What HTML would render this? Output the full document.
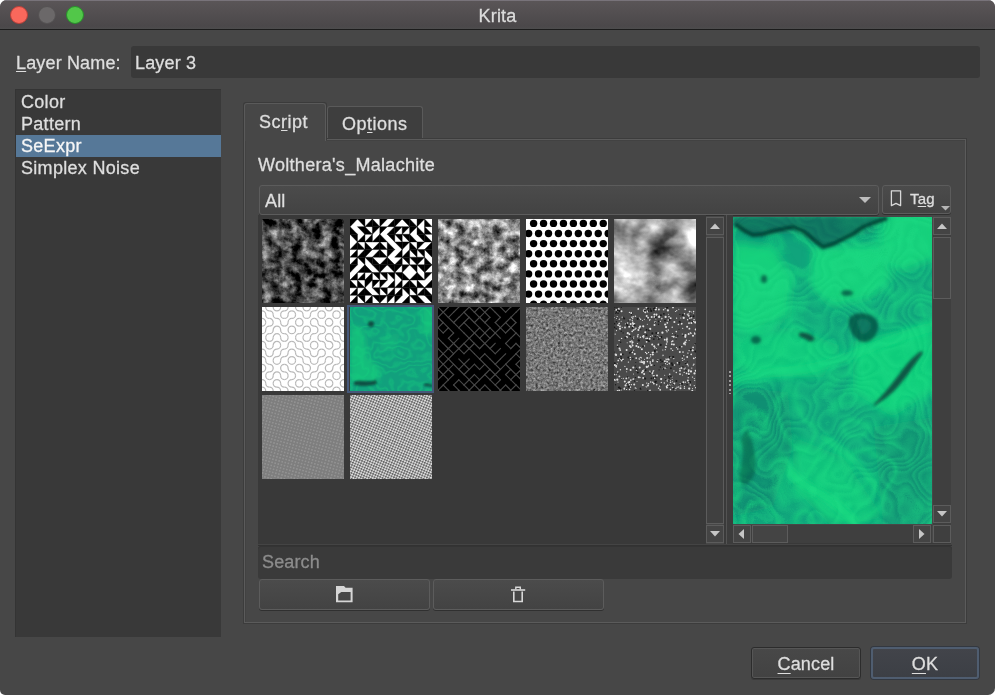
<!DOCTYPE html>
<html><head><meta charset="utf-8">
<style>
*{box-sizing:border-box;margin:0;padding:0}
html,body{width:995px;height:695px;overflow:hidden;background:#fff}
body{font-family:"Liberation Sans",sans-serif;font-size:18px;color:#dedede;position:relative}
.a{position:absolute}
#win{left:0;top:0;width:995px;height:695px;background:#474747;border-radius:7px 7px 7px 5px;overflow:hidden}
#title{left:0;top:0;width:995px;height:29px;background:linear-gradient(#5a5557,#4b484a 90%,#4d4c4d);border-top:1px solid #78737a}
#tline{left:0;top:29px;width:995px;height:1px;background:#1c1c1c}
.tl{width:18px;height:18px;border-radius:50%;top:6px}
.u{text-decoration:underline;text-underline-offset:2px;text-decoration-thickness:1px}
.t{line-height:21px;white-space:nowrap;will-change:transform;-webkit-text-stroke:0.3px currentColor;letter-spacing:0.15px}
.sb{background:#444;border:1px solid #5c5c5c}
.btn{background:linear-gradient(#4b4b4b,#434343);border:1px solid #5c5c5c;border-radius:3px;box-shadow:0 1px 0 #303030}
.th{width:82px;height:84px;overflow:hidden}
.th svg{display:block}
</style></head><body>
<div id="win" class="a">
  <div id="title" class="a"></div>
  <div id="tline" class="a"></div>
  <div class="a tl" style="left:10px;background:#f9685c;border:1px solid #b9403a"></div>
  <div class="a tl" style="left:38px;background:#6b6869;border:1px solid #555253"></div>
  <div class="a tl" style="left:66px;background:#52c749;border:1px solid #27902a"></div>
  <div class="a t" style="left:0;top:6px;width:995px;text-align:center;color:#dcdcdc">Krita</div>

  <div class="a t" style="left:16px;top:53px"><span class="u">L</span>ayer Name:</div>
  <div class="a" style="left:131px;top:46px;width:849px;height:32px;background:#393939;border-radius:3px"></div>
  <div class="a t" style="left:135px;top:53px">Layer 3</div>

  <div class="a" style="left:15px;top:89px;width:206px;height:548px;background:#393939;box-shadow:inset 1px 1px 0 #343434"></div>
  <div class="a" style="left:16px;top:135px;width:205px;height:22px;background:#567898"></div>
  <div class="a t" style="left:21px;top:91px;line-height:22px;letter-spacing:0.3px">Color<br>Pattern<br><span style="color:#f6f6f6">SeExpr</span><br>Simplex Noise</div>

  <!-- tabs -->
  <div class="a" style="left:327px;top:106px;width:96px;height:34px;background:#3e3e3e;border:1px solid #5a5a5a;border-bottom:none;border-radius:3px 3px 0 0"></div>
  <div class="a" style="left:244px;top:139px;width:722px;height:484px;border:1px solid #5b5b5b;box-shadow:0 0 0 1px #3c3c3c,inset 1px 1px 0 #424242"></div>
  <div class="a" style="left:244px;top:103px;width:82px;height:38px;background:#474747;border:1px solid #5a5a5a;border-bottom:none;border-radius:3px 3px 0 0;box-shadow:-1px -1px 0 #3b3b3b,1px -1px 0 #3b3b3b"></div>
  <div class="a t" style="left:259px;top:112px;letter-spacing:0.5px">Sc<span class="u">r</span>ipt</div>
  <div class="a t" style="left:342px;top:114px;letter-spacing:0.5px">Op<span class="u">t</span>ions</div>

  <div class="a t" style="left:258px;top:155px;letter-spacing:0.3px">Wolthera's_Malachite</div>

  <!-- combo -->
  <div class="a btn" style="left:259px;top:185px;width:620px;height:30px"></div>
  <div class="a t" style="left:265px;top:191px">All</div>
  <svg class="a" style="left:858px;top:196px" width="14" height="8"><path d="M1 1 L13 1 L7 7 Z" fill="#bdbdbd"/></svg>

  <!-- tag -->
  <div class="a btn" style="left:882px;top:185px;width:69px;height:29px"></div>
  <svg class="a" style="left:889px;top:189px" width="14" height="20"><path d="M2.4 1.8 H11.6 V16.6 L7 14.4 L2.4 16.6 Z" fill="none" stroke="#d8d8d8" stroke-width="1.3" stroke-linejoin="round"/></svg>
  <div class="a t" style="left:910px;top:188px;font-size:15px">T<span class="u">a</span>g</div>
  <svg class="a" style="left:940px;top:205px" width="11" height="6"><path d="M1 1 L10 1 L5.5 5.5 Z" fill="#b5b5b5"/></svg>

  <!-- grid -->
  <div class="a" style="left:258px;top:215px;width:448px;height:329px;background:#393939"></div>
  <div id="thumbs"><div class="a th" style="left:262px;top:219px;"><svg width="82" height="84" viewBox="0 0 82 84" preserveAspectRatio="none"><filter id="n1" x="0" y="0" width="100%" height="100%" color-interpolation-filters="sRGB"><feTurbulence type="fractalNoise" baseFrequency="0.1" numOctaves="4" seed="3"/><feColorMatrix type="matrix" values="0.33 0.33 0.33 0 0 0.33 0.33 0.33 0 0 0.33 0.33 0.33 0 0 0 0 0 0 1"/><feComponentTransfer><feFuncR type="linear" slope="2.4" intercept="-0.92"/><feFuncG type="linear" slope="2.4" intercept="-0.92"/><feFuncB type="linear" slope="2.4" intercept="-0.92"/></feComponentTransfer></filter><rect width="82" height="84" filter="url(#n1)"/></svg></div>
<div class="a th" style="left:350px;top:219px;"><svg width="82" height="84" viewBox="0 0 82 84" preserveAspectRatio="none"><rect width="82" height="84" fill="#fff"/><g stroke="#000" stroke-width="0.4" stroke-linejoin="round"><path d="M0.00 0.00L7.45 0.00L0.00 7.64Z"/><path d="M0.00 7.64L7.45 15.27L0.00 15.27Z"/><path d="M0.00 15.27L7.45 15.27L7.45 22.91Z"/><path d="M7.45 22.91L7.45 30.55L0.00 30.55Z"/><path d="M7.45 30.55L7.45 38.18L0.00 38.18Z"/><path d="M7.45 38.18L7.45 45.82L0.00 45.82Z"/><path d="M0.00 45.82L7.45 45.82L0.00 53.45Z"/><path d="M7.45 53.45L7.45 61.09L0.00 61.09Z"/><path d="M0.00 61.09L7.45 68.73L0.00 68.73Z"/><path d="M7.45 68.73L7.45 76.36L0.00 76.36Z"/><path d="M7.45 76.36L7.45 84.00L0.00 84.00Z"/><path d="M7.45 0.00L14.91 0.00L14.91 7.64Z"/><path d="M7.45 7.64L14.91 7.64L14.91 15.27Z"/><path d="M14.91 15.27L14.91 22.91L7.45 22.91Z"/><path d="M7.45 22.91L14.91 30.55L7.45 30.55Z"/><path d="M14.91 30.55L14.91 38.18L7.45 38.18Z"/><path d="M7.45 38.18L14.91 38.18L14.91 45.82Z"/><path d="M14.91 45.82L14.91 53.45L7.45 53.45Z"/><path d="M14.91 53.45L14.91 61.09L7.45 61.09Z"/><path d="M7.45 61.09L14.91 68.73L7.45 68.73Z"/><path d="M14.91 68.73L14.91 76.36L7.45 76.36Z"/><path d="M7.45 76.36L14.91 76.36L14.91 84.00Z"/><path d="M22.36 0.00L22.36 7.64L14.91 7.64Z"/><path d="M14.91 7.64L22.36 15.27L14.91 15.27Z"/><path d="M22.36 15.27L22.36 22.91L14.91 22.91Z"/><path d="M14.91 22.91L22.36 30.55L14.91 30.55Z"/><path d="M14.91 30.55L22.36 30.55L14.91 38.18Z"/><path d="M14.91 38.18L22.36 38.18L22.36 45.82Z"/><path d="M14.91 45.82L22.36 53.45L14.91 53.45Z"/><path d="M22.36 53.45L22.36 61.09L14.91 61.09Z"/><path d="M14.91 61.09L22.36 61.09L14.91 68.73Z"/><path d="M14.91 68.73L22.36 76.36L14.91 76.36Z"/><path d="M22.36 76.36L22.36 84.00L14.91 84.00Z"/><path d="M22.36 0.00L29.82 7.64L22.36 7.64Z"/><path d="M22.36 7.64L29.82 7.64L22.36 15.27Z"/><path d="M29.82 15.27L29.82 22.91L22.36 22.91Z"/><path d="M29.82 22.91L29.82 30.55L22.36 30.55Z"/><path d="M29.82 30.55L29.82 38.18L22.36 38.18Z"/><path d="M22.36 38.18L29.82 45.82L22.36 45.82Z"/><path d="M22.36 45.82L29.82 45.82L29.82 53.45Z"/><path d="M22.36 53.45L29.82 53.45L29.82 61.09Z"/><path d="M22.36 61.09L29.82 61.09L22.36 68.73Z"/><path d="M22.36 68.73L29.82 68.73L29.82 76.36Z"/><path d="M22.36 76.36L29.82 76.36L29.82 84.00Z"/><path d="M29.82 0.00L37.27 0.00L29.82 7.64Z"/><path d="M29.82 7.64L37.27 7.64L29.82 15.27Z"/><path d="M29.82 15.27L37.27 22.91L29.82 22.91Z"/><path d="M29.82 22.91L37.27 30.55L29.82 30.55Z"/><path d="M29.82 30.55L37.27 38.18L29.82 38.18Z"/><path d="M37.27 38.18L37.27 45.82L29.82 45.82Z"/><path d="M29.82 45.82L37.27 45.82L29.82 53.45Z"/><path d="M29.82 53.45L37.27 53.45L37.27 61.09Z"/><path d="M29.82 61.09L37.27 61.09L29.82 68.73Z"/><path d="M29.82 68.73L37.27 68.73L37.27 76.36Z"/><path d="M29.82 76.36L37.27 76.36L29.82 84.00Z"/><path d="M44.73 0.00L44.73 7.64L37.27 7.64Z"/><path d="M44.73 7.64L44.73 15.27L37.27 15.27Z"/><path d="M37.27 15.27L44.73 15.27L44.73 22.91Z"/><path d="M37.27 22.91L44.73 30.55L37.27 30.55Z"/><path d="M37.27 30.55L44.73 30.55L37.27 38.18Z"/><path d="M37.27 38.18L44.73 45.82L37.27 45.82Z"/><path d="M37.27 45.82L44.73 45.82L44.73 53.45Z"/><path d="M37.27 53.45L44.73 53.45L44.73 61.09Z"/><path d="M44.73 61.09L44.73 68.73L37.27 68.73Z"/><path d="M44.73 68.73L44.73 76.36L37.27 76.36Z"/><path d="M37.27 76.36L44.73 76.36L37.27 84.00Z"/><path d="M44.73 0.00L52.18 0.00L44.73 7.64Z"/><path d="M44.73 7.64L52.18 7.64L44.73 15.27Z"/><path d="M44.73 15.27L52.18 15.27L52.18 22.91Z"/><path d="M44.73 22.91L52.18 22.91L52.18 30.55Z"/><path d="M52.18 30.55L52.18 38.18L44.73 38.18Z"/><path d="M52.18 38.18L52.18 45.82L44.73 45.82Z"/><path d="M44.73 45.82L52.18 45.82L44.73 53.45Z"/><path d="M44.73 53.45L52.18 53.45L52.18 61.09Z"/><path d="M52.18 61.09L52.18 68.73L44.73 68.73Z"/><path d="M52.18 68.73L52.18 76.36L44.73 76.36Z"/><path d="M44.73 76.36L52.18 76.36L44.73 84.00Z"/><path d="M52.18 0.00L59.64 0.00L59.64 7.64Z"/><path d="M52.18 7.64L59.64 7.64L52.18 15.27Z"/><path d="M52.18 15.27L59.64 15.27L59.64 22.91Z"/><path d="M52.18 22.91L59.64 22.91L52.18 30.55Z"/><path d="M59.64 30.55L59.64 38.18L52.18 38.18Z"/><path d="M52.18 38.18L59.64 38.18L59.64 45.82Z"/><path d="M52.18 45.82L59.64 45.82L52.18 53.45Z"/><path d="M52.18 53.45L59.64 61.09L52.18 61.09Z"/><path d="M59.64 61.09L59.64 68.73L52.18 68.73Z"/><path d="M52.18 68.73L59.64 68.73L59.64 76.36Z"/><path d="M59.64 76.36L59.64 84.00L52.18 84.00Z"/><path d="M59.64 0.00L67.09 7.64L59.64 7.64Z"/><path d="M59.64 7.64L67.09 7.64L59.64 15.27Z"/><path d="M59.64 15.27L67.09 22.91L59.64 22.91Z"/><path d="M59.64 22.91L67.09 30.55L59.64 30.55Z"/><path d="M59.64 30.55L67.09 30.55L67.09 38.18Z"/><path d="M59.64 38.18L67.09 38.18L67.09 45.82Z"/><path d="M59.64 45.82L67.09 45.82L67.09 53.45Z"/><path d="M67.09 53.45L67.09 61.09L59.64 61.09Z"/><path d="M59.64 61.09L67.09 68.73L59.64 68.73Z"/><path d="M59.64 68.73L67.09 68.73L67.09 76.36Z"/><path d="M59.64 76.36L67.09 76.36L67.09 84.00Z"/><path d="M67.09 0.00L74.55 0.00L67.09 7.64Z"/><path d="M67.09 7.64L74.55 15.27L67.09 15.27Z"/><path d="M67.09 15.27L74.55 15.27L74.55 22.91Z"/><path d="M67.09 22.91L74.55 22.91L67.09 30.55Z"/><path d="M67.09 30.55L74.55 30.55L74.55 38.18Z"/><path d="M67.09 38.18L74.55 38.18L67.09 45.82Z"/><path d="M67.09 45.82L74.55 45.82L74.55 53.45Z"/><path d="M67.09 53.45L74.55 61.09L67.09 61.09Z"/><path d="M67.09 61.09L74.55 68.73L67.09 68.73Z"/><path d="M74.55 68.73L74.55 76.36L67.09 76.36Z"/><path d="M67.09 76.36L74.55 84.00L67.09 84.00Z"/><path d="M74.55 0.00L82.00 7.64L74.55 7.64Z"/><path d="M74.55 7.64L82.00 15.27L74.55 15.27Z"/><path d="M74.55 15.27L82.00 22.91L74.55 22.91Z"/><path d="M82.00 22.91L82.00 30.55L74.55 30.55Z"/><path d="M74.55 30.55L82.00 30.55L82.00 38.18Z"/><path d="M74.55 38.18L82.00 45.82L74.55 45.82Z"/><path d="M74.55 45.82L82.00 45.82L74.55 53.45Z"/><path d="M74.55 53.45L82.00 53.45L74.55 61.09Z"/><path d="M82.00 61.09L82.00 68.73L74.55 68.73Z"/><path d="M74.55 68.73L82.00 76.36L74.55 76.36Z"/><path d="M74.55 76.36L82.00 76.36L82.00 84.00Z"/></g></svg></div>
<div class="a th" style="left:438px;top:219px;"><svg width="82" height="84" viewBox="0 0 82 84" preserveAspectRatio="none"><filter id="n3" x="0" y="0" width="100%" height="100%" color-interpolation-filters="sRGB"><feTurbulence type="fractalNoise" baseFrequency="0.11" numOctaves="4" seed="11"/><feColorMatrix type="matrix" values="0.33 0.33 0.33 0 0 0.33 0.33 0.33 0 0 0.33 0.33 0.33 0 0 0 0 0 0 1"/><feComponentTransfer><feFuncR type="linear" slope="2.5" intercept="-0.7"/><feFuncG type="linear" slope="2.5" intercept="-0.7"/><feFuncB type="linear" slope="2.5" intercept="-0.7"/></feComponentTransfer></filter><rect width="82" height="84" filter="url(#n3)"/></svg></div>
<div class="a th" style="left:526px;top:219px;"><svg width="82" height="84" viewBox="0 0 82 84" preserveAspectRatio="none"><rect width="82" height="84" fill="#fff"/><circle cx="7.60" cy="4.40" r="3.7"/><circle cx="17.55" cy="4.40" r="3.7"/><circle cx="27.50" cy="4.40" r="3.7"/><circle cx="37.45" cy="4.40" r="3.7"/><circle cx="47.40" cy="4.40" r="3.7"/><circle cx="57.35" cy="4.40" r="3.7"/><circle cx="67.30" cy="4.40" r="3.7"/><circle cx="77.25" cy="4.40" r="3.7"/><circle cx="87.20" cy="4.40" r="3.7"/><circle cx="2.60" cy="14.50" r="3.7"/><circle cx="12.55" cy="14.50" r="3.7"/><circle cx="22.50" cy="14.50" r="3.7"/><circle cx="32.45" cy="14.50" r="3.7"/><circle cx="42.40" cy="14.50" r="3.7"/><circle cx="52.35" cy="14.50" r="3.7"/><circle cx="62.30" cy="14.50" r="3.7"/><circle cx="72.25" cy="14.50" r="3.7"/><circle cx="82.20" cy="14.50" r="3.7"/><circle cx="7.60" cy="24.60" r="3.7"/><circle cx="17.55" cy="24.60" r="3.7"/><circle cx="27.50" cy="24.60" r="3.7"/><circle cx="37.45" cy="24.60" r="3.7"/><circle cx="47.40" cy="24.60" r="3.7"/><circle cx="57.35" cy="24.60" r="3.7"/><circle cx="67.30" cy="24.60" r="3.7"/><circle cx="77.25" cy="24.60" r="3.7"/><circle cx="87.20" cy="24.60" r="3.7"/><circle cx="2.60" cy="34.70" r="3.7"/><circle cx="12.55" cy="34.70" r="3.7"/><circle cx="22.50" cy="34.70" r="3.7"/><circle cx="32.45" cy="34.70" r="3.7"/><circle cx="42.40" cy="34.70" r="3.7"/><circle cx="52.35" cy="34.70" r="3.7"/><circle cx="62.30" cy="34.70" r="3.7"/><circle cx="72.25" cy="34.70" r="3.7"/><circle cx="82.20" cy="34.70" r="3.7"/><circle cx="7.60" cy="44.80" r="3.7"/><circle cx="17.55" cy="44.80" r="3.7"/><circle cx="27.50" cy="44.80" r="3.7"/><circle cx="37.45" cy="44.80" r="3.7"/><circle cx="47.40" cy="44.80" r="3.7"/><circle cx="57.35" cy="44.80" r="3.7"/><circle cx="67.30" cy="44.80" r="3.7"/><circle cx="77.25" cy="44.80" r="3.7"/><circle cx="87.20" cy="44.80" r="3.7"/><circle cx="2.60" cy="54.90" r="3.7"/><circle cx="12.55" cy="54.90" r="3.7"/><circle cx="22.50" cy="54.90" r="3.7"/><circle cx="32.45" cy="54.90" r="3.7"/><circle cx="42.40" cy="54.90" r="3.7"/><circle cx="52.35" cy="54.90" r="3.7"/><circle cx="62.30" cy="54.90" r="3.7"/><circle cx="72.25" cy="54.90" r="3.7"/><circle cx="82.20" cy="54.90" r="3.7"/><circle cx="7.60" cy="65.00" r="3.7"/><circle cx="17.55" cy="65.00" r="3.7"/><circle cx="27.50" cy="65.00" r="3.7"/><circle cx="37.45" cy="65.00" r="3.7"/><circle cx="47.40" cy="65.00" r="3.7"/><circle cx="57.35" cy="65.00" r="3.7"/><circle cx="67.30" cy="65.00" r="3.7"/><circle cx="77.25" cy="65.00" r="3.7"/><circle cx="87.20" cy="65.00" r="3.7"/><circle cx="2.60" cy="75.10" r="3.7"/><circle cx="12.55" cy="75.10" r="3.7"/><circle cx="22.50" cy="75.10" r="3.7"/><circle cx="32.45" cy="75.10" r="3.7"/><circle cx="42.40" cy="75.10" r="3.7"/><circle cx="52.35" cy="75.10" r="3.7"/><circle cx="62.30" cy="75.10" r="3.7"/><circle cx="72.25" cy="75.10" r="3.7"/><circle cx="82.20" cy="75.10" r="3.7"/><circle cx="7.60" cy="85.20" r="3.7"/><circle cx="17.55" cy="85.20" r="3.7"/><circle cx="27.50" cy="85.20" r="3.7"/><circle cx="37.45" cy="85.20" r="3.7"/><circle cx="47.40" cy="85.20" r="3.7"/><circle cx="57.35" cy="85.20" r="3.7"/><circle cx="67.30" cy="85.20" r="3.7"/><circle cx="77.25" cy="85.20" r="3.7"/><circle cx="87.20" cy="85.20" r="3.7"/></svg></div>
<div class="a th" style="left:614px;top:219px;"><svg width="82" height="84" viewBox="0 0 82 84" preserveAspectRatio="none"><filter id="n5" x="0" y="0" width="100%" height="100%" color-interpolation-filters="sRGB"><feTurbulence type="fractalNoise" baseFrequency="0.03 0.04" numOctaves="4" seed="17"/><feColorMatrix type="matrix" values="0.33 0.33 0.33 0 0 0.33 0.33 0.33 0 0 0.33 0.33 0.33 0 0 0 0 0 0 1"/><feComponentTransfer><feFuncR type="linear" slope="2.4" intercept="-0.56"/><feFuncG type="linear" slope="2.4" intercept="-0.56"/><feFuncB type="linear" slope="2.4" intercept="-0.56"/></feComponentTransfer></filter><rect width="82" height="84" filter="url(#n5)"/></svg></div>
<div class="a th" style="left:262px;top:307px;"><svg width="82" height="84" viewBox="0 0 82 84" preserveAspectRatio="none"><rect width="82" height="84" fill="#fff"/><g fill="none" stroke="#b8b8b8" stroke-width="1.25"><path d="M3.73 0.00A3.73 3.82 0 0 0 7.45 3.82M0.00 3.82A3.73 3.82 0 0 1 3.73 7.64"/><path d="M3.73 7.64A3.73 3.82 0 0 0 7.45 11.45M0.00 11.45A3.73 3.82 0 0 1 3.73 15.27"/><path d="M3.73 15.27A3.73 3.82 0 0 1 0.00 19.09M3.73 22.91A3.73 3.82 0 0 1 7.45 19.09"/><path d="M3.73 22.91A3.73 3.82 0 0 1 0.00 26.73M3.73 30.55A3.73 3.82 0 0 1 7.45 26.73"/><path d="M3.73 30.55A3.73 3.82 0 0 0 7.45 34.36M0.00 34.36A3.73 3.82 0 0 1 3.73 38.18"/><path d="M3.73 38.18A3.73 3.82 0 0 0 7.45 42.00M0.00 42.00A3.73 3.82 0 0 1 3.73 45.82"/><path d="M3.73 45.82A3.73 3.82 0 0 0 7.45 49.64M0.00 49.64A3.73 3.82 0 0 1 3.73 53.45"/><path d="M3.73 53.45A3.73 3.82 0 0 0 7.45 57.27M0.00 57.27A3.73 3.82 0 0 1 3.73 61.09"/><path d="M3.73 61.09A3.73 3.82 0 0 1 0.00 64.91M3.73 68.73A3.73 3.82 0 0 1 7.45 64.91"/><path d="M3.73 68.73A3.73 3.82 0 0 0 7.45 72.55M0.00 72.55A3.73 3.82 0 0 1 3.73 76.36"/><path d="M3.73 76.36A3.73 3.82 0 0 0 7.45 80.18M0.00 80.18A3.73 3.82 0 0 1 3.73 84.00"/><path d="M11.18 0.00A3.73 3.82 0 0 0 14.91 3.82M7.45 3.82A3.73 3.82 0 0 1 11.18 7.64"/><path d="M11.18 7.64A3.73 3.82 0 0 0 14.91 11.45M7.45 11.45A3.73 3.82 0 0 1 11.18 15.27"/><path d="M11.18 15.27A3.73 3.82 0 0 1 7.45 19.09M11.18 22.91A3.73 3.82 0 0 1 14.91 19.09"/><path d="M11.18 22.91A3.73 3.82 0 0 1 7.45 26.73M11.18 30.55A3.73 3.82 0 0 1 14.91 26.73"/><path d="M11.18 30.55A3.73 3.82 0 0 1 7.45 34.36M11.18 38.18A3.73 3.82 0 0 1 14.91 34.36"/><path d="M11.18 38.18A3.73 3.82 0 0 1 7.45 42.00M11.18 45.82A3.73 3.82 0 0 1 14.91 42.00"/><path d="M11.18 45.82A3.73 3.82 0 0 1 7.45 49.64M11.18 53.45A3.73 3.82 0 0 1 14.91 49.64"/><path d="M11.18 53.45A3.73 3.82 0 0 0 14.91 57.27M7.45 57.27A3.73 3.82 0 0 1 11.18 61.09"/><path d="M11.18 61.09A3.73 3.82 0 0 1 7.45 64.91M11.18 68.73A3.73 3.82 0 0 1 14.91 64.91"/><path d="M11.18 68.73A3.73 3.82 0 0 1 7.45 72.55M11.18 76.36A3.73 3.82 0 0 1 14.91 72.55"/><path d="M11.18 76.36A3.73 3.82 0 0 0 14.91 80.18M7.45 80.18A3.73 3.82 0 0 1 11.18 84.00"/><path d="M18.64 0.00A3.73 3.82 0 0 1 14.91 3.82M18.64 7.64A3.73 3.82 0 0 1 22.36 3.82"/><path d="M18.64 7.64A3.73 3.82 0 0 0 22.36 11.45M14.91 11.45A3.73 3.82 0 0 1 18.64 15.27"/><path d="M18.64 15.27A3.73 3.82 0 0 0 22.36 19.09M14.91 19.09A3.73 3.82 0 0 1 18.64 22.91"/><path d="M18.64 22.91A3.73 3.82 0 0 0 22.36 26.73M14.91 26.73A3.73 3.82 0 0 1 18.64 30.55"/><path d="M18.64 30.55A3.73 3.82 0 0 0 22.36 34.36M14.91 34.36A3.73 3.82 0 0 1 18.64 38.18"/><path d="M18.64 38.18A3.73 3.82 0 0 1 14.91 42.00M18.64 45.82A3.73 3.82 0 0 1 22.36 42.00"/><path d="M18.64 45.82A3.73 3.82 0 0 1 14.91 49.64M18.64 53.45A3.73 3.82 0 0 1 22.36 49.64"/><path d="M18.64 53.45A3.73 3.82 0 0 1 14.91 57.27M18.64 61.09A3.73 3.82 0 0 1 22.36 57.27"/><path d="M18.64 61.09A3.73 3.82 0 0 0 22.36 64.91M14.91 64.91A3.73 3.82 0 0 1 18.64 68.73"/><path d="M18.64 68.73A3.73 3.82 0 0 0 22.36 72.55M14.91 72.55A3.73 3.82 0 0 1 18.64 76.36"/><path d="M18.64 76.36A3.73 3.82 0 0 0 22.36 80.18M14.91 80.18A3.73 3.82 0 0 1 18.64 84.00"/><path d="M26.09 0.00A3.73 3.82 0 0 1 22.36 3.82M26.09 7.64A3.73 3.82 0 0 1 29.82 3.82"/><path d="M26.09 7.64A3.73 3.82 0 0 1 22.36 11.45M26.09 15.27A3.73 3.82 0 0 1 29.82 11.45"/><path d="M26.09 15.27A3.73 3.82 0 0 1 22.36 19.09M26.09 22.91A3.73 3.82 0 0 1 29.82 19.09"/><path d="M26.09 22.91A3.73 3.82 0 0 0 29.82 26.73M22.36 26.73A3.73 3.82 0 0 1 26.09 30.55"/><path d="M26.09 30.55A3.73 3.82 0 0 1 22.36 34.36M26.09 38.18A3.73 3.82 0 0 1 29.82 34.36"/><path d="M26.09 38.18A3.73 3.82 0 0 1 22.36 42.00M26.09 45.82A3.73 3.82 0 0 1 29.82 42.00"/><path d="M26.09 45.82A3.73 3.82 0 0 1 22.36 49.64M26.09 53.45A3.73 3.82 0 0 1 29.82 49.64"/><path d="M26.09 53.45A3.73 3.82 0 0 0 29.82 57.27M22.36 57.27A3.73 3.82 0 0 1 26.09 61.09"/><path d="M26.09 61.09A3.73 3.82 0 0 0 29.82 64.91M22.36 64.91A3.73 3.82 0 0 1 26.09 68.73"/><path d="M26.09 68.73A3.73 3.82 0 0 1 22.36 72.55M26.09 76.36A3.73 3.82 0 0 1 29.82 72.55"/><path d="M26.09 76.36A3.73 3.82 0 0 0 29.82 80.18M22.36 80.18A3.73 3.82 0 0 1 26.09 84.00"/><path d="M33.55 0.00A3.73 3.82 0 0 0 37.27 3.82M29.82 3.82A3.73 3.82 0 0 1 33.55 7.64"/><path d="M33.55 7.64A3.73 3.82 0 0 1 29.82 11.45M33.55 15.27A3.73 3.82 0 0 1 37.27 11.45"/><path d="M33.55 15.27A3.73 3.82 0 0 0 37.27 19.09M29.82 19.09A3.73 3.82 0 0 1 33.55 22.91"/><path d="M33.55 22.91A3.73 3.82 0 0 1 29.82 26.73M33.55 30.55A3.73 3.82 0 0 1 37.27 26.73"/><path d="M33.55 30.55A3.73 3.82 0 0 0 37.27 34.36M29.82 34.36A3.73 3.82 0 0 1 33.55 38.18"/><path d="M33.55 38.18A3.73 3.82 0 0 0 37.27 42.00M29.82 42.00A3.73 3.82 0 0 1 33.55 45.82"/><path d="M33.55 45.82A3.73 3.82 0 0 0 37.27 49.64M29.82 49.64A3.73 3.82 0 0 1 33.55 53.45"/><path d="M33.55 53.45A3.73 3.82 0 0 1 29.82 57.27M33.55 61.09A3.73 3.82 0 0 1 37.27 57.27"/><path d="M33.55 61.09A3.73 3.82 0 0 0 37.27 64.91M29.82 64.91A3.73 3.82 0 0 1 33.55 68.73"/><path d="M33.55 68.73A3.73 3.82 0 0 1 29.82 72.55M33.55 76.36A3.73 3.82 0 0 1 37.27 72.55"/><path d="M33.55 76.36A3.73 3.82 0 0 0 37.27 80.18M29.82 80.18A3.73 3.82 0 0 1 33.55 84.00"/><path d="M41.00 0.00A3.73 3.82 0 0 0 44.73 3.82M37.27 3.82A3.73 3.82 0 0 1 41.00 7.64"/><path d="M41.00 7.64A3.73 3.82 0 0 0 44.73 11.45M37.27 11.45A3.73 3.82 0 0 1 41.00 15.27"/><path d="M41.00 15.27A3.73 3.82 0 0 1 37.27 19.09M41.00 22.91A3.73 3.82 0 0 1 44.73 19.09"/><path d="M41.00 22.91A3.73 3.82 0 0 1 37.27 26.73M41.00 30.55A3.73 3.82 0 0 1 44.73 26.73"/><path d="M41.00 30.55A3.73 3.82 0 0 0 44.73 34.36M37.27 34.36A3.73 3.82 0 0 1 41.00 38.18"/><path d="M41.00 38.18A3.73 3.82 0 0 0 44.73 42.00M37.27 42.00A3.73 3.82 0 0 1 41.00 45.82"/><path d="M41.00 45.82A3.73 3.82 0 0 0 44.73 49.64M37.27 49.64A3.73 3.82 0 0 1 41.00 53.45"/><path d="M41.00 53.45A3.73 3.82 0 0 0 44.73 57.27M37.27 57.27A3.73 3.82 0 0 1 41.00 61.09"/><path d="M41.00 61.09A3.73 3.82 0 0 0 44.73 64.91M37.27 64.91A3.73 3.82 0 0 1 41.00 68.73"/><path d="M41.00 68.73A3.73 3.82 0 0 0 44.73 72.55M37.27 72.55A3.73 3.82 0 0 1 41.00 76.36"/><path d="M41.00 76.36A3.73 3.82 0 0 1 37.27 80.18M41.00 84.00A3.73 3.82 0 0 1 44.73 80.18"/><path d="M48.45 0.00A3.73 3.82 0 0 1 44.73 3.82M48.45 7.64A3.73 3.82 0 0 1 52.18 3.82"/><path d="M48.45 7.64A3.73 3.82 0 0 1 44.73 11.45M48.45 15.27A3.73 3.82 0 0 1 52.18 11.45"/><path d="M48.45 15.27A3.73 3.82 0 0 0 52.18 19.09M44.73 19.09A3.73 3.82 0 0 1 48.45 22.91"/><path d="M48.45 22.91A3.73 3.82 0 0 1 44.73 26.73M48.45 30.55A3.73 3.82 0 0 1 52.18 26.73"/><path d="M48.45 30.55A3.73 3.82 0 0 1 44.73 34.36M48.45 38.18A3.73 3.82 0 0 1 52.18 34.36"/><path d="M48.45 38.18A3.73 3.82 0 0 0 52.18 42.00M44.73 42.00A3.73 3.82 0 0 1 48.45 45.82"/><path d="M48.45 45.82A3.73 3.82 0 0 0 52.18 49.64M44.73 49.64A3.73 3.82 0 0 1 48.45 53.45"/><path d="M48.45 53.45A3.73 3.82 0 0 0 52.18 57.27M44.73 57.27A3.73 3.82 0 0 1 48.45 61.09"/><path d="M48.45 61.09A3.73 3.82 0 0 1 44.73 64.91M48.45 68.73A3.73 3.82 0 0 1 52.18 64.91"/><path d="M48.45 68.73A3.73 3.82 0 0 1 44.73 72.55M48.45 76.36A3.73 3.82 0 0 1 52.18 72.55"/><path d="M48.45 76.36A3.73 3.82 0 0 0 52.18 80.18M44.73 80.18A3.73 3.82 0 0 1 48.45 84.00"/><path d="M55.91 0.00A3.73 3.82 0 0 1 52.18 3.82M55.91 7.64A3.73 3.82 0 0 1 59.64 3.82"/><path d="M55.91 7.64A3.73 3.82 0 0 0 59.64 11.45M52.18 11.45A3.73 3.82 0 0 1 55.91 15.27"/><path d="M55.91 15.27A3.73 3.82 0 0 0 59.64 19.09M52.18 19.09A3.73 3.82 0 0 1 55.91 22.91"/><path d="M55.91 22.91A3.73 3.82 0 0 1 52.18 26.73M55.91 30.55A3.73 3.82 0 0 1 59.64 26.73"/><path d="M55.91 30.55A3.73 3.82 0 0 0 59.64 34.36M52.18 34.36A3.73 3.82 0 0 1 55.91 38.18"/><path d="M55.91 38.18A3.73 3.82 0 0 1 52.18 42.00M55.91 45.82A3.73 3.82 0 0 1 59.64 42.00"/><path d="M55.91 45.82A3.73 3.82 0 0 1 52.18 49.64M55.91 53.45A3.73 3.82 0 0 1 59.64 49.64"/><path d="M55.91 53.45A3.73 3.82 0 0 1 52.18 57.27M55.91 61.09A3.73 3.82 0 0 1 59.64 57.27"/><path d="M55.91 61.09A3.73 3.82 0 0 1 52.18 64.91M55.91 68.73A3.73 3.82 0 0 1 59.64 64.91"/><path d="M55.91 68.73A3.73 3.82 0 0 1 52.18 72.55M55.91 76.36A3.73 3.82 0 0 1 59.64 72.55"/><path d="M55.91 76.36A3.73 3.82 0 0 0 59.64 80.18M52.18 80.18A3.73 3.82 0 0 1 55.91 84.00"/><path d="M63.36 0.00A3.73 3.82 0 0 0 67.09 3.82M59.64 3.82A3.73 3.82 0 0 1 63.36 7.64"/><path d="M63.36 7.64A3.73 3.82 0 0 1 59.64 11.45M63.36 15.27A3.73 3.82 0 0 1 67.09 11.45"/><path d="M63.36 15.27A3.73 3.82 0 0 0 67.09 19.09M59.64 19.09A3.73 3.82 0 0 1 63.36 22.91"/><path d="M63.36 22.91A3.73 3.82 0 0 1 59.64 26.73M63.36 30.55A3.73 3.82 0 0 1 67.09 26.73"/><path d="M63.36 30.55A3.73 3.82 0 0 0 67.09 34.36M59.64 34.36A3.73 3.82 0 0 1 63.36 38.18"/><path d="M63.36 38.18A3.73 3.82 0 0 0 67.09 42.00M59.64 42.00A3.73 3.82 0 0 1 63.36 45.82"/><path d="M63.36 45.82A3.73 3.82 0 0 1 59.64 49.64M63.36 53.45A3.73 3.82 0 0 1 67.09 49.64"/><path d="M63.36 53.45A3.73 3.82 0 0 1 59.64 57.27M63.36 61.09A3.73 3.82 0 0 1 67.09 57.27"/><path d="M63.36 61.09A3.73 3.82 0 0 0 67.09 64.91M59.64 64.91A3.73 3.82 0 0 1 63.36 68.73"/><path d="M63.36 68.73A3.73 3.82 0 0 1 59.64 72.55M63.36 76.36A3.73 3.82 0 0 1 67.09 72.55"/><path d="M63.36 76.36A3.73 3.82 0 0 0 67.09 80.18M59.64 80.18A3.73 3.82 0 0 1 63.36 84.00"/><path d="M70.82 0.00A3.73 3.82 0 0 1 67.09 3.82M70.82 7.64A3.73 3.82 0 0 1 74.55 3.82"/><path d="M70.82 7.64A3.73 3.82 0 0 0 74.55 11.45M67.09 11.45A3.73 3.82 0 0 1 70.82 15.27"/><path d="M70.82 15.27A3.73 3.82 0 0 1 67.09 19.09M70.82 22.91A3.73 3.82 0 0 1 74.55 19.09"/><path d="M70.82 22.91A3.73 3.82 0 0 0 74.55 26.73M67.09 26.73A3.73 3.82 0 0 1 70.82 30.55"/><path d="M70.82 30.55A3.73 3.82 0 0 0 74.55 34.36M67.09 34.36A3.73 3.82 0 0 1 70.82 38.18"/><path d="M70.82 38.18A3.73 3.82 0 0 1 67.09 42.00M70.82 45.82A3.73 3.82 0 0 1 74.55 42.00"/><path d="M70.82 45.82A3.73 3.82 0 0 0 74.55 49.64M67.09 49.64A3.73 3.82 0 0 1 70.82 53.45"/><path d="M70.82 53.45A3.73 3.82 0 0 1 67.09 57.27M70.82 61.09A3.73 3.82 0 0 1 74.55 57.27"/><path d="M70.82 61.09A3.73 3.82 0 0 1 67.09 64.91M70.82 68.73A3.73 3.82 0 0 1 74.55 64.91"/><path d="M70.82 68.73A3.73 3.82 0 0 0 74.55 72.55M67.09 72.55A3.73 3.82 0 0 1 70.82 76.36"/><path d="M70.82 76.36A3.73 3.82 0 0 1 67.09 80.18M70.82 84.00A3.73 3.82 0 0 1 74.55 80.18"/><path d="M78.27 0.00A3.73 3.82 0 0 0 82.00 3.82M74.55 3.82A3.73 3.82 0 0 1 78.27 7.64"/><path d="M78.27 7.64A3.73 3.82 0 0 1 74.55 11.45M78.27 15.27A3.73 3.82 0 0 1 82.00 11.45"/><path d="M78.27 15.27A3.73 3.82 0 0 0 82.00 19.09M74.55 19.09A3.73 3.82 0 0 1 78.27 22.91"/><path d="M78.27 22.91A3.73 3.82 0 0 0 82.00 26.73M74.55 26.73A3.73 3.82 0 0 1 78.27 30.55"/><path d="M78.27 30.55A3.73 3.82 0 0 0 82.00 34.36M74.55 34.36A3.73 3.82 0 0 1 78.27 38.18"/><path d="M78.27 38.18A3.73 3.82 0 0 1 74.55 42.00M78.27 45.82A3.73 3.82 0 0 1 82.00 42.00"/><path d="M78.27 45.82A3.73 3.82 0 0 0 82.00 49.64M74.55 49.64A3.73 3.82 0 0 1 78.27 53.45"/><path d="M78.27 53.45A3.73 3.82 0 0 1 74.55 57.27M78.27 61.09A3.73 3.82 0 0 1 82.00 57.27"/><path d="M78.27 61.09A3.73 3.82 0 0 0 82.00 64.91M74.55 64.91A3.73 3.82 0 0 1 78.27 68.73"/><path d="M78.27 68.73A3.73 3.82 0 0 1 74.55 72.55M78.27 76.36A3.73 3.82 0 0 1 82.00 72.55"/><path d="M78.27 76.36A3.73 3.82 0 0 0 82.00 80.18M74.55 80.18A3.73 3.82 0 0 1 78.27 84.00"/></g></svg></div>
<div class="a" style="left:347px;top:305px;width:87px;height:88px;border:2px solid #46587a"></div>
<div class="a th" style="left:350px;top:307px;"><svg width="82" height="84" viewBox="0 0 82 84" preserveAspectRatio="none"><filter id="m7v" x="0" y="0" width="100%" height="100%" color-interpolation-filters="sRGB"><feTurbulence type="fractalNoise" baseFrequency="0.035" numOctaves="3" seed="5"/><feColorMatrix type="matrix" values="0 0 0 0 0.09  0 0 0 0 0.83  0 0 0 0 0.5  1 0 0 0 0"/><feComponentTransfer><feFuncA type="table" tableValues="0 0 0.9 0 0 0.9 0 0 0.9 0 0 0.9 0 0 0.9 0 0 0.9 0"/></feComponentTransfer></filter><filter id="b7a" x="-50%" y="-50%" width="200%" height="200%"><feGaussianBlur stdDeviation="3"/></filter><filter id="b7b" x="-50%" y="-50%" width="200%" height="200%"><feGaussianBlur stdDeviation="0.8"/></filter><rect width="82" height="84" fill="#12a07d"/><g fill="#14cf7c" filter="url(#b7a)" opacity="0.65"><path d="M0 18 L14 22 L18 50 L30 62 L28 76 L0 76Z"/><path d="M72 0 L84 0 L84 30 L72 26Z"/><path d="M30 30 L50 26 L46 44 L30 44Z" opacity="0.5"/></g><rect width="82" height="84" filter="url(#m7v)" opacity="0.4"/><g fill="#083f3a" filter="url(#b7b)" opacity="0.85"><circle cx="21" cy="17" r="3"/><path d="M4 75 C10 72 18 76 26 73 L27 77 C18 80 10 79 4 78Z"/><path d="M74 77 C78 76 80 77 83 78 L83 80 C79 79 76 79 74 79Z"/></g></svg></div>
<div class="a th" style="left:438px;top:307px;"><svg width="82" height="84" viewBox="0 0 82 84" preserveAspectRatio="none"><rect width="82" height="84" fill="#000"/><g stroke="#4a4a4a" stroke-width="1.1" fill="none" stroke-linecap="square"><path d="M-5.2 -5.2l-5.2 5.2"/><path d="M5.2 -5.2l-5.2 5.2"/><path d="M15.6 -5.2l-5.2 5.2"/><path d="M26.0 -5.2l-5.2 5.2"/><path d="M36.4 -5.2l5.2 5.2"/><path d="M36.4 -5.2l-5.2 5.2"/><path d="M46.8 -5.2l-5.2 5.2"/><path d="M57.2 -5.2l5.2 5.2"/><path d="M67.6 -5.2l5.2 5.2"/><path d="M78.0 -5.2l-5.2 5.2"/><path d="M88.4 -5.2l-5.2 5.2"/><path d="M-10.4 0.0l5.2 5.2"/><path d="M-10.4 0.0l-5.2 5.2"/><path d="M0.0 0.0l5.2 5.2"/><path d="M10.4 0.0l-5.2 5.2"/><path d="M20.8 0.0l-5.2 5.2"/><path d="M31.2 0.0l5.2 5.2"/><path d="M31.2 0.0l-5.2 5.2"/><path d="M41.6 0.0l5.2 5.2"/><path d="M41.6 0.0l-5.2 5.2"/><path d="M52.0 0.0l5.2 5.2"/><path d="M52.0 0.0l-5.2 5.2"/><path d="M62.4 0.0l5.2 5.2"/><path d="M72.8 0.0l-5.2 5.2"/><path d="M83.2 0.0l5.2 5.2"/><path d="M83.2 0.0l-5.2 5.2"/><path d="M93.6 0.0l5.2 5.2"/><path d="M93.6 0.0l-5.2 5.2"/><path d="M-5.2 5.2l5.2 5.2"/><path d="M5.2 5.2l5.2 5.2"/><path d="M5.2 5.2l-5.2 5.2"/><path d="M15.6 5.2l-5.2 5.2"/><path d="M26.0 5.2l5.2 5.2"/><path d="M26.0 5.2l-5.2 5.2"/><path d="M36.4 5.2l5.2 5.2"/><path d="M46.8 5.2l5.2 5.2"/><path d="M46.8 5.2l-5.2 5.2"/><path d="M57.2 5.2l5.2 5.2"/><path d="M78.0 5.2l-5.2 5.2"/><path d="M88.4 5.2l5.2 5.2"/><path d="M88.4 5.2l-5.2 5.2"/><path d="M98.8 5.2l5.2 5.2"/><path d="M98.8 5.2l-5.2 5.2"/><path d="M-10.4 10.4l5.2 5.2"/><path d="M-10.4 10.4l-5.2 5.2"/><path d="M0.0 10.4l5.2 5.2"/><path d="M0.0 10.4l-5.2 5.2"/><path d="M10.4 10.4l5.2 5.2"/><path d="M20.8 10.4l-5.2 5.2"/><path d="M31.2 10.4l5.2 5.2"/><path d="M31.2 10.4l-5.2 5.2"/><path d="M41.6 10.4l5.2 5.2"/><path d="M41.6 10.4l-5.2 5.2"/><path d="M52.0 10.4l-5.2 5.2"/><path d="M62.4 10.4l-5.2 5.2"/><path d="M72.8 10.4l5.2 5.2"/><path d="M72.8 10.4l-5.2 5.2"/><path d="M93.6 10.4l5.2 5.2"/><path d="M93.6 10.4l-5.2 5.2"/><path d="M-5.2 15.6l5.2 5.2"/><path d="M-5.2 15.6l-5.2 5.2"/><path d="M5.2 15.6l5.2 5.2"/><path d="M5.2 15.6l-5.2 5.2"/><path d="M15.6 15.6l5.2 5.2"/><path d="M26.0 15.6l5.2 5.2"/><path d="M26.0 15.6l-5.2 5.2"/><path d="M36.4 15.6l5.2 5.2"/><path d="M46.8 15.6l5.2 5.2"/><path d="M57.2 15.6l5.2 5.2"/><path d="M67.6 15.6l5.2 5.2"/><path d="M67.6 15.6l-5.2 5.2"/><path d="M78.0 15.6l-5.2 5.2"/><path d="M98.8 15.6l-5.2 5.2"/><path d="M-10.4 20.8l-5.2 5.2"/><path d="M0.0 20.8l5.2 5.2"/><path d="M0.0 20.8l-5.2 5.2"/><path d="M10.4 20.8l5.2 5.2"/><path d="M10.4 20.8l-5.2 5.2"/><path d="M20.8 20.8l5.2 5.2"/><path d="M31.2 20.8l5.2 5.2"/><path d="M41.6 20.8l5.2 5.2"/><path d="M41.6 20.8l-5.2 5.2"/><path d="M52.0 20.8l5.2 5.2"/><path d="M52.0 20.8l-5.2 5.2"/><path d="M62.4 20.8l5.2 5.2"/><path d="M62.4 20.8l-5.2 5.2"/><path d="M72.8 20.8l5.2 5.2"/><path d="M72.8 20.8l-5.2 5.2"/><path d="M83.2 20.8l5.2 5.2"/><path d="M93.6 20.8l5.2 5.2"/><path d="M-5.2 26.0l5.2 5.2"/><path d="M-5.2 26.0l-5.2 5.2"/><path d="M15.6 26.0l-5.2 5.2"/><path d="M26.0 26.0l5.2 5.2"/><path d="M36.4 26.0l5.2 5.2"/><path d="M36.4 26.0l-5.2 5.2"/><path d="M46.8 26.0l5.2 5.2"/><path d="M46.8 26.0l-5.2 5.2"/><path d="M57.2 26.0l5.2 5.2"/><path d="M57.2 26.0l-5.2 5.2"/><path d="M78.0 26.0l5.2 5.2"/><path d="M78.0 26.0l-5.2 5.2"/><path d="M88.4 26.0l5.2 5.2"/><path d="M98.8 26.0l5.2 5.2"/><path d="M98.8 26.0l-5.2 5.2"/><path d="M-10.4 31.2l5.2 5.2"/><path d="M-10.4 31.2l-5.2 5.2"/><path d="M0.0 31.2l5.2 5.2"/><path d="M0.0 31.2l-5.2 5.2"/><path d="M10.4 31.2l5.2 5.2"/><path d="M20.8 31.2l-5.2 5.2"/><path d="M31.2 31.2l5.2 5.2"/><path d="M31.2 31.2l-5.2 5.2"/><path d="M41.6 31.2l5.2 5.2"/><path d="M52.0 31.2l-5.2 5.2"/><path d="M72.8 31.2l-5.2 5.2"/><path d="M83.2 31.2l5.2 5.2"/><path d="M93.6 31.2l5.2 5.2"/><path d="M93.6 31.2l-5.2 5.2"/><path d="M-5.2 36.4l5.2 5.2"/><path d="M-5.2 36.4l-5.2 5.2"/><path d="M5.2 36.4l5.2 5.2"/><path d="M15.6 36.4l5.2 5.2"/><path d="M15.6 36.4l-5.2 5.2"/><path d="M26.0 36.4l5.2 5.2"/><path d="M26.0 36.4l-5.2 5.2"/><path d="M36.4 36.4l5.2 5.2"/><path d="M36.4 36.4l-5.2 5.2"/><path d="M46.8 36.4l5.2 5.2"/><path d="M46.8 36.4l-5.2 5.2"/><path d="M57.2 36.4l-5.2 5.2"/><path d="M67.6 36.4l5.2 5.2"/><path d="M78.0 36.4l5.2 5.2"/><path d="M78.0 36.4l-5.2 5.2"/><path d="M88.4 36.4l5.2 5.2"/><path d="M88.4 36.4l-5.2 5.2"/><path d="M98.8 36.4l5.2 5.2"/><path d="M98.8 36.4l-5.2 5.2"/><path d="M-10.4 41.6l5.2 5.2"/><path d="M0.0 41.6l5.2 5.2"/><path d="M10.4 41.6l5.2 5.2"/><path d="M10.4 41.6l-5.2 5.2"/><path d="M20.8 41.6l5.2 5.2"/><path d="M20.8 41.6l-5.2 5.2"/><path d="M31.2 41.6l5.2 5.2"/><path d="M31.2 41.6l-5.2 5.2"/><path d="M52.0 41.6l5.2 5.2"/><path d="M62.4 41.6l-5.2 5.2"/><path d="M83.2 41.6l5.2 5.2"/><path d="M83.2 41.6l-5.2 5.2"/><path d="M93.6 41.6l5.2 5.2"/><path d="M93.6 41.6l-5.2 5.2"/><path d="M5.2 46.8l5.2 5.2"/><path d="M5.2 46.8l-5.2 5.2"/><path d="M15.6 46.8l-5.2 5.2"/><path d="M36.4 46.8l5.2 5.2"/><path d="M46.8 46.8l5.2 5.2"/><path d="M46.8 46.8l-5.2 5.2"/><path d="M67.6 46.8l-5.2 5.2"/><path d="M78.0 46.8l5.2 5.2"/><path d="M78.0 46.8l-5.2 5.2"/><path d="M88.4 46.8l5.2 5.2"/><path d="M98.8 46.8l5.2 5.2"/><path d="M98.8 46.8l-5.2 5.2"/><path d="M-10.4 52.0l5.2 5.2"/><path d="M-10.4 52.0l-5.2 5.2"/><path d="M0.0 52.0l5.2 5.2"/><path d="M0.0 52.0l-5.2 5.2"/><path d="M10.4 52.0l5.2 5.2"/><path d="M10.4 52.0l-5.2 5.2"/><path d="M20.8 52.0l5.2 5.2"/><path d="M31.2 52.0l-5.2 5.2"/><path d="M41.6 52.0l5.2 5.2"/><path d="M52.0 52.0l5.2 5.2"/><path d="M62.4 52.0l-5.2 5.2"/><path d="M72.8 52.0l-5.2 5.2"/><path d="M83.2 52.0l5.2 5.2"/><path d="M83.2 52.0l-5.2 5.2"/><path d="M93.6 52.0l-5.2 5.2"/><path d="M-5.2 57.2l-5.2 5.2"/><path d="M5.2 57.2l5.2 5.2"/><path d="M5.2 57.2l-5.2 5.2"/><path d="M15.6 57.2l5.2 5.2"/><path d="M15.6 57.2l-5.2 5.2"/><path d="M26.0 57.2l5.2 5.2"/><path d="M26.0 57.2l-5.2 5.2"/><path d="M36.4 57.2l5.2 5.2"/><path d="M36.4 57.2l-5.2 5.2"/><path d="M46.8 57.2l5.2 5.2"/><path d="M46.8 57.2l-5.2 5.2"/><path d="M57.2 57.2l5.2 5.2"/><path d="M67.6 57.2l5.2 5.2"/><path d="M67.6 57.2l-5.2 5.2"/><path d="M78.0 57.2l5.2 5.2"/><path d="M88.4 57.2l5.2 5.2"/><path d="M88.4 57.2l-5.2 5.2"/><path d="M-10.4 62.4l5.2 5.2"/><path d="M-10.4 62.4l-5.2 5.2"/><path d="M0.0 62.4l5.2 5.2"/><path d="M0.0 62.4l-5.2 5.2"/><path d="M10.4 62.4l5.2 5.2"/><path d="M10.4 62.4l-5.2 5.2"/><path d="M20.8 62.4l5.2 5.2"/><path d="M31.2 62.4l-5.2 5.2"/><path d="M52.0 62.4l5.2 5.2"/><path d="M52.0 62.4l-5.2 5.2"/><path d="M62.4 62.4l-5.2 5.2"/><path d="M72.8 62.4l5.2 5.2"/><path d="M72.8 62.4l-5.2 5.2"/><path d="M83.2 62.4l5.2 5.2"/><path d="M83.2 62.4l-5.2 5.2"/><path d="M93.6 62.4l5.2 5.2"/><path d="M93.6 62.4l-5.2 5.2"/><path d="M-5.2 67.6l5.2 5.2"/><path d="M5.2 67.6l5.2 5.2"/><path d="M5.2 67.6l-5.2 5.2"/><path d="M15.6 67.6l-5.2 5.2"/><path d="M26.0 67.6l5.2 5.2"/><path d="M36.4 67.6l5.2 5.2"/><path d="M36.4 67.6l-5.2 5.2"/><path d="M46.8 67.6l5.2 5.2"/><path d="M46.8 67.6l-5.2 5.2"/><path d="M57.2 67.6l5.2 5.2"/><path d="M57.2 67.6l-5.2 5.2"/><path d="M67.6 67.6l5.2 5.2"/><path d="M78.0 67.6l5.2 5.2"/><path d="M78.0 67.6l-5.2 5.2"/><path d="M88.4 67.6l-5.2 5.2"/><path d="M98.8 67.6l5.2 5.2"/><path d="M98.8 67.6l-5.2 5.2"/><path d="M-10.4 72.8l-5.2 5.2"/><path d="M10.4 72.8l-5.2 5.2"/><path d="M20.8 72.8l5.2 5.2"/><path d="M20.8 72.8l-5.2 5.2"/><path d="M31.2 72.8l5.2 5.2"/><path d="M31.2 72.8l-5.2 5.2"/><path d="M41.6 72.8l-5.2 5.2"/><path d="M52.0 72.8l5.2 5.2"/><path d="M62.4 72.8l-5.2 5.2"/><path d="M72.8 72.8l5.2 5.2"/><path d="M83.2 72.8l5.2 5.2"/><path d="M93.6 72.8l5.2 5.2"/><path d="M93.6 72.8l-5.2 5.2"/><path d="M-5.2 78.0l5.2 5.2"/><path d="M5.2 78.0l5.2 5.2"/><path d="M5.2 78.0l-5.2 5.2"/><path d="M15.6 78.0l5.2 5.2"/><path d="M26.0 78.0l5.2 5.2"/><path d="M36.4 78.0l5.2 5.2"/><path d="M36.4 78.0l-5.2 5.2"/><path d="M46.8 78.0l5.2 5.2"/><path d="M46.8 78.0l-5.2 5.2"/><path d="M57.2 78.0l5.2 5.2"/><path d="M67.6 78.0l5.2 5.2"/><path d="M67.6 78.0l-5.2 5.2"/><path d="M78.0 78.0l5.2 5.2"/><path d="M78.0 78.0l-5.2 5.2"/><path d="M88.4 78.0l5.2 5.2"/><path d="M88.4 78.0l-5.2 5.2"/><path d="M98.8 78.0l5.2 5.2"/><path d="M98.8 78.0l-5.2 5.2"/><path d="M-10.4 83.2l5.2 5.2"/><path d="M0.0 83.2l5.2 5.2"/><path d="M0.0 83.2l-5.2 5.2"/><path d="M10.4 83.2l5.2 5.2"/><path d="M20.8 83.2l5.2 5.2"/><path d="M20.8 83.2l-5.2 5.2"/><path d="M31.2 83.2l5.2 5.2"/><path d="M31.2 83.2l-5.2 5.2"/><path d="M41.6 83.2l5.2 5.2"/><path d="M41.6 83.2l-5.2 5.2"/><path d="M52.0 83.2l5.2 5.2"/><path d="M62.4 83.2l5.2 5.2"/><path d="M62.4 83.2l-5.2 5.2"/><path d="M72.8 83.2l-5.2 5.2"/><path d="M83.2 83.2l-5.2 5.2"/><path d="M93.6 83.2l5.2 5.2"/><path d="M-5.2 88.4l5.2 5.2"/><path d="M-5.2 88.4l-5.2 5.2"/><path d="M5.2 88.4l5.2 5.2"/><path d="M5.2 88.4l-5.2 5.2"/><path d="M15.6 88.4l5.2 5.2"/><path d="M26.0 88.4l-5.2 5.2"/><path d="M36.4 88.4l-5.2 5.2"/><path d="M46.8 88.4l5.2 5.2"/><path d="M46.8 88.4l-5.2 5.2"/><path d="M57.2 88.4l5.2 5.2"/><path d="M67.6 88.4l-5.2 5.2"/><path d="M78.0 88.4l5.2 5.2"/><path d="M98.8 88.4l5.2 5.2"/><path d="M98.8 88.4l-5.2 5.2"/></g></svg></div>
<div class="a th" style="left:526px;top:307px;"><svg width="82" height="84" viewBox="0 0 82 84" preserveAspectRatio="none"><filter id="n9" x="0" y="0" width="100%" height="100%" color-interpolation-filters="sRGB"><feTurbulence type="fractalNoise" baseFrequency="0.4" numOctaves="3" seed="9"/><feColorMatrix type="matrix" values="0.33 0.33 0.33 0 0 0.33 0.33 0.33 0 0 0.33 0.33 0.33 0 0 0 0 0 0 1"/><feComponentTransfer><feFuncR type="linear" slope="1.1" intercept="-0.08"/><feFuncG type="linear" slope="1.1" intercept="-0.08"/><feFuncB type="linear" slope="1.1" intercept="-0.08"/></feComponentTransfer></filter><rect width="82" height="84" filter="url(#n9)"/></svg></div>
<div class="a th" style="left:614px;top:307px;"><svg width="82" height="84" viewBox="0 0 82 84" preserveAspectRatio="none"><rect width="82" height="84" fill="#4a4a4a"/><circle cx="76.3" cy="78.0" r="0.8" fill="#e0e0e0"/><circle cx="36.8" cy="65.8" r="0.6" fill="#e0e0e0"/><circle cx="79.7" cy="9.1" r="0.9" fill="#1a1a1a"/><circle cx="69.4" cy="75.2" r="1.0" fill="#e0e0e0"/><circle cx="0.1" cy="10.6" r="0.5" fill="#e0e0e0"/><circle cx="58.6" cy="80.8" r="0.8" fill="#e0e0e0"/><circle cx="35.9" cy="64.2" r="0.7" fill="#e0e0e0"/><circle cx="77.4" cy="16.1" r="1.0" fill="#e0e0e0"/><circle cx="0.1" cy="45.1" r="0.7" fill="#1a1a1a"/><circle cx="25.9" cy="70.5" r="0.8" fill="#e0e0e0"/><circle cx="44.9" cy="2.5" r="0.9" fill="#e0e0e0"/><circle cx="4.5" cy="16.3" r="0.9" fill="#1a1a1a"/><circle cx="6.6" cy="19.1" r="0.7" fill="#e0e0e0"/><circle cx="40.4" cy="58.4" r="0.7" fill="#1a1a1a"/><circle cx="32.5" cy="0.6" r="1.0" fill="#e0e0e0"/><circle cx="5.5" cy="41.6" r="1.0" fill="#e0e0e0"/><circle cx="15.9" cy="39.1" r="1.0" fill="#e0e0e0"/><circle cx="8.9" cy="52.4" r="1.0" fill="#e0e0e0"/><circle cx="39.8" cy="76.5" r="0.9" fill="#e0e0e0"/><circle cx="75.6" cy="4.6" r="0.9" fill="#e0e0e0"/><circle cx="34.1" cy="59.6" r="0.8" fill="#e0e0e0"/><circle cx="58.4" cy="26.4" r="0.5" fill="#e0e0e0"/><circle cx="13.6" cy="16.0" r="0.8" fill="#e0e0e0"/><circle cx="38.3" cy="26.2" r="1.0" fill="#1a1a1a"/><circle cx="80.8" cy="37.2" r="0.5" fill="#e0e0e0"/><circle cx="6.6" cy="35.3" r="0.8" fill="#1a1a1a"/><circle cx="62.2" cy="31.9" r="0.7" fill="#1a1a1a"/><circle cx="65.9" cy="7.4" r="0.6" fill="#1a1a1a"/><circle cx="44.4" cy="37.5" r="0.9" fill="#e0e0e0"/><circle cx="38.9" cy="53.1" r="0.9" fill="#e0e0e0"/><circle cx="33.2" cy="31.5" r="1.0" fill="#e0e0e0"/><circle cx="5.1" cy="16.4" r="0.9" fill="#e0e0e0"/><circle cx="29.8" cy="28.1" r="0.5" fill="#1a1a1a"/><circle cx="61.2" cy="57.9" r="0.7" fill="#1a1a1a"/><circle cx="59.2" cy="50.0" r="1.1" fill="#1a1a1a"/><circle cx="5.4" cy="69.4" r="0.9" fill="#e0e0e0"/><circle cx="38.2" cy="65.2" r="1.0" fill="#1a1a1a"/><circle cx="66.8" cy="11.1" r="0.5" fill="#e0e0e0"/><circle cx="76.3" cy="25.5" r="0.6" fill="#e0e0e0"/><circle cx="19.4" cy="72.3" r="1.0" fill="#e0e0e0"/><circle cx="48.8" cy="43.0" r="0.6" fill="#e0e0e0"/><circle cx="33.4" cy="54.6" r="0.8" fill="#e0e0e0"/><circle cx="13.2" cy="35.8" r="0.5" fill="#e0e0e0"/><circle cx="51.2" cy="17.5" r="1.1" fill="#e0e0e0"/><circle cx="79.7" cy="14.5" r="0.8" fill="#e0e0e0"/><circle cx="73.1" cy="19.7" r="1.0" fill="#e0e0e0"/><circle cx="62.3" cy="65.5" r="0.7" fill="#e0e0e0"/><circle cx="21.9" cy="21.3" r="0.8" fill="#e0e0e0"/><circle cx="15.2" cy="19.8" r="1.0" fill="#e0e0e0"/><circle cx="15.4" cy="5.4" r="0.6" fill="#e0e0e0"/><circle cx="43.2" cy="54.6" r="0.8" fill="#e0e0e0"/><circle cx="3.0" cy="0.4" r="0.6" fill="#1a1a1a"/><circle cx="36.8" cy="31.4" r="0.6" fill="#1a1a1a"/><circle cx="4.1" cy="50.4" r="0.6" fill="#1a1a1a"/><circle cx="6.2" cy="43.1" r="0.9" fill="#e0e0e0"/><circle cx="63.5" cy="55.8" r="0.9" fill="#e0e0e0"/><circle cx="58.2" cy="29.4" r="0.7" fill="#e0e0e0"/><circle cx="3.6" cy="84.0" r="0.9" fill="#e0e0e0"/><circle cx="74.9" cy="68.4" r="0.7" fill="#1a1a1a"/><circle cx="30.5" cy="52.2" r="0.5" fill="#e0e0e0"/><circle cx="40.6" cy="40.6" r="1.0" fill="#e0e0e0"/><circle cx="54.5" cy="13.0" r="0.9" fill="#e0e0e0"/><circle cx="32.6" cy="22.8" r="0.9" fill="#1a1a1a"/><circle cx="34.3" cy="4.3" r="1.0" fill="#1a1a1a"/><circle cx="34.0" cy="1.5" r="1.0" fill="#1a1a1a"/><circle cx="52.8" cy="32.8" r="1.1" fill="#e0e0e0"/><circle cx="35.6" cy="13.2" r="0.6" fill="#e0e0e0"/><circle cx="47.4" cy="30.6" r="0.6" fill="#1a1a1a"/><circle cx="4.2" cy="12.0" r="0.7" fill="#1a1a1a"/><circle cx="47.0" cy="77.9" r="0.6" fill="#1a1a1a"/><circle cx="28.5" cy="13.6" r="0.5" fill="#e0e0e0"/><circle cx="31.5" cy="63.3" r="1.0" fill="#1a1a1a"/><circle cx="24.7" cy="70.3" r="1.0" fill="#e0e0e0"/><circle cx="25.8" cy="51.0" r="0.6" fill="#e0e0e0"/><circle cx="58.4" cy="57.8" r="0.9" fill="#1a1a1a"/><circle cx="70.2" cy="52.2" r="0.6" fill="#e0e0e0"/><circle cx="38.8" cy="47.5" r="1.1" fill="#e0e0e0"/><circle cx="12.8" cy="30.2" r="1.1" fill="#e0e0e0"/><circle cx="66.9" cy="16.2" r="1.0" fill="#1a1a1a"/><circle cx="55.1" cy="56.1" r="0.7" fill="#e0e0e0"/><circle cx="37.4" cy="71.3" r="0.9" fill="#1a1a1a"/><circle cx="25.3" cy="20.9" r="0.7" fill="#e0e0e0"/><circle cx="41.3" cy="15.0" r="1.1" fill="#e0e0e0"/><circle cx="38.2" cy="37.5" r="1.0" fill="#e0e0e0"/><circle cx="68.6" cy="68.1" r="0.5" fill="#e0e0e0"/><circle cx="29.4" cy="30.7" r="0.8" fill="#1a1a1a"/><circle cx="53.9" cy="3.4" r="1.1" fill="#e0e0e0"/><circle cx="25.7" cy="60.5" r="1.0" fill="#e0e0e0"/><circle cx="73.4" cy="54.8" r="0.5" fill="#1a1a1a"/><circle cx="5.4" cy="51.6" r="0.6" fill="#e0e0e0"/><circle cx="10.8" cy="74.4" r="1.0" fill="#e0e0e0"/><circle cx="65.2" cy="57.6" r="0.6" fill="#1a1a1a"/><circle cx="68.3" cy="51.3" r="0.7" fill="#e0e0e0"/><circle cx="50.3" cy="76.0" r="0.7" fill="#e0e0e0"/><circle cx="79.1" cy="40.3" r="0.9" fill="#e0e0e0"/><circle cx="19.5" cy="31.3" r="0.7" fill="#e0e0e0"/><circle cx="52.2" cy="23.4" r="0.7" fill="#e0e0e0"/><circle cx="65.0" cy="22.2" r="0.5" fill="#1a1a1a"/><circle cx="70.4" cy="81.2" r="0.8" fill="#e0e0e0"/><circle cx="56.5" cy="75.3" r="0.8" fill="#e0e0e0"/><circle cx="70.2" cy="62.0" r="0.7" fill="#e0e0e0"/><circle cx="30.3" cy="12.3" r="0.5" fill="#e0e0e0"/><circle cx="18.9" cy="51.7" r="0.7" fill="#1a1a1a"/><circle cx="42.3" cy="26.0" r="1.0" fill="#1a1a1a"/><circle cx="76.1" cy="75.2" r="0.9" fill="#1a1a1a"/><circle cx="18.2" cy="24.4" r="0.8" fill="#e0e0e0"/><circle cx="29.9" cy="4.0" r="0.9" fill="#e0e0e0"/><circle cx="3.7" cy="4.6" r="0.7" fill="#e0e0e0"/><circle cx="42.9" cy="44.9" r="0.7" fill="#e0e0e0"/><circle cx="11.0" cy="30.8" r="0.6" fill="#1a1a1a"/><circle cx="1.2" cy="67.3" r="0.8" fill="#1a1a1a"/><circle cx="5.2" cy="12.2" r="0.7" fill="#e0e0e0"/><circle cx="66.5" cy="81.2" r="1.0" fill="#e0e0e0"/><circle cx="73.2" cy="50.0" r="0.9" fill="#e0e0e0"/><circle cx="42.4" cy="41.4" r="0.5" fill="#e0e0e0"/><circle cx="5.0" cy="2.1" r="0.6" fill="#e0e0e0"/><circle cx="74.8" cy="8.8" r="0.9" fill="#e0e0e0"/><circle cx="16.2" cy="34.7" r="0.9" fill="#e0e0e0"/><circle cx="53.1" cy="34.9" r="0.8" fill="#e0e0e0"/><circle cx="5.2" cy="52.6" r="0.9" fill="#1a1a1a"/><circle cx="39.2" cy="45.2" r="0.8" fill="#e0e0e0"/><circle cx="74.8" cy="6.8" r="0.6" fill="#e0e0e0"/><circle cx="81.7" cy="22.0" r="0.6" fill="#e0e0e0"/><circle cx="73.1" cy="77.7" r="0.7" fill="#1a1a1a"/><circle cx="4.3" cy="53.4" r="0.9" fill="#e0e0e0"/><circle cx="75.2" cy="81.6" r="1.1" fill="#e0e0e0"/><circle cx="73.3" cy="7.2" r="0.6" fill="#e0e0e0"/><circle cx="74.2" cy="70.7" r="0.6" fill="#e0e0e0"/><circle cx="75.0" cy="16.1" r="0.9" fill="#e0e0e0"/><circle cx="31.1" cy="71.6" r="1.1" fill="#1a1a1a"/><circle cx="69.0" cy="45.1" r="0.8" fill="#e0e0e0"/><circle cx="0.5" cy="2.2" r="0.6" fill="#1a1a1a"/><circle cx="72.6" cy="66.3" r="0.9" fill="#e0e0e0"/><circle cx="46.3" cy="14.4" r="0.6" fill="#e0e0e0"/><circle cx="51.0" cy="13.6" r="0.9" fill="#1a1a1a"/><circle cx="2.5" cy="11.6" r="0.5" fill="#e0e0e0"/><circle cx="5.6" cy="3.9" r="1.0" fill="#1a1a1a"/><circle cx="16.3" cy="80.2" r="0.9" fill="#e0e0e0"/><circle cx="72.1" cy="63.5" r="0.7" fill="#1a1a1a"/><circle cx="20.2" cy="17.1" r="1.1" fill="#e0e0e0"/><circle cx="74.7" cy="63.3" r="1.0" fill="#e0e0e0"/><circle cx="51.8" cy="40.1" r="1.0" fill="#e0e0e0"/><circle cx="53.0" cy="24.7" r="0.7" fill="#e0e0e0"/><circle cx="28.8" cy="78.1" r="1.0" fill="#e0e0e0"/><circle cx="74.6" cy="64.6" r="0.8" fill="#e0e0e0"/><circle cx="23.6" cy="62.6" r="0.5" fill="#1a1a1a"/><circle cx="42.5" cy="8.3" r="0.5" fill="#e0e0e0"/><circle cx="46.4" cy="60.0" r="0.8" fill="#1a1a1a"/><circle cx="23.5" cy="36.6" r="0.7" fill="#e0e0e0"/><circle cx="61.5" cy="4.5" r="0.6" fill="#e0e0e0"/><circle cx="57.0" cy="69.3" r="0.9" fill="#1a1a1a"/><circle cx="78.5" cy="43.3" r="0.6" fill="#e0e0e0"/><circle cx="66.8" cy="78.8" r="0.6" fill="#e0e0e0"/><circle cx="77.0" cy="64.4" r="1.1" fill="#e0e0e0"/><circle cx="46.0" cy="8.8" r="0.6" fill="#e0e0e0"/><circle cx="76.1" cy="74.9" r="0.8" fill="#1a1a1a"/><circle cx="53.0" cy="31.2" r="0.8" fill="#e0e0e0"/><circle cx="44.7" cy="14.4" r="0.9" fill="#1a1a1a"/><circle cx="77.4" cy="10.7" r="0.9" fill="#e0e0e0"/><circle cx="49.6" cy="2.8" r="0.8" fill="#e0e0e0"/><circle cx="71.2" cy="37.8" r="0.7" fill="#e0e0e0"/><circle cx="38.0" cy="57.9" r="0.6" fill="#e0e0e0"/><circle cx="27.4" cy="54.0" r="0.8" fill="#e0e0e0"/><circle cx="21.9" cy="63.4" r="0.9" fill="#1a1a1a"/><circle cx="59.3" cy="81.9" r="0.9" fill="#1a1a1a"/><circle cx="28.6" cy="19.8" r="0.7" fill="#1a1a1a"/><circle cx="78.3" cy="83.6" r="0.9" fill="#e0e0e0"/><circle cx="16.0" cy="12.7" r="0.7" fill="#e0e0e0"/><circle cx="24.4" cy="23.0" r="1.0" fill="#e0e0e0"/><circle cx="23.0" cy="74.4" r="0.5" fill="#e0e0e0"/><circle cx="70.1" cy="36.7" r="1.1" fill="#e0e0e0"/><circle cx="24.3" cy="1.9" r="0.9" fill="#e0e0e0"/><circle cx="0.5" cy="20.4" r="0.9" fill="#1a1a1a"/><circle cx="48.2" cy="54.4" r="0.9" fill="#1a1a1a"/><circle cx="53.5" cy="73.7" r="0.9" fill="#e0e0e0"/><circle cx="18.7" cy="15.2" r="0.8" fill="#e0e0e0"/><circle cx="21.3" cy="58.9" r="0.6" fill="#1a1a1a"/><circle cx="32.8" cy="59.9" r="1.0" fill="#e0e0e0"/><circle cx="39.6" cy="1.7" r="0.8" fill="#1a1a1a"/><circle cx="54.2" cy="73.3" r="0.7" fill="#1a1a1a"/><circle cx="0.9" cy="69.9" r="0.6" fill="#1a1a1a"/><circle cx="20.6" cy="18.3" r="1.1" fill="#1a1a1a"/><circle cx="16.4" cy="29.2" r="0.8" fill="#1a1a1a"/><circle cx="16.8" cy="40.0" r="1.0" fill="#e0e0e0"/><circle cx="30.3" cy="28.8" r="0.8" fill="#1a1a1a"/><circle cx="81.2" cy="15.4" r="1.1" fill="#e0e0e0"/><circle cx="59.8" cy="51.6" r="0.7" fill="#e0e0e0"/><circle cx="31.3" cy="5.2" r="1.0" fill="#e0e0e0"/><circle cx="51.5" cy="56.7" r="0.6" fill="#e0e0e0"/><circle cx="24.9" cy="33.6" r="1.1" fill="#1a1a1a"/><circle cx="81.5" cy="80.7" r="0.6" fill="#e0e0e0"/><circle cx="76.2" cy="5.8" r="0.6" fill="#1a1a1a"/><circle cx="52.7" cy="60.5" r="0.6" fill="#1a1a1a"/><circle cx="54.6" cy="69.8" r="0.7" fill="#1a1a1a"/><circle cx="81.7" cy="63.8" r="1.0" fill="#e0e0e0"/><circle cx="38.5" cy="65.8" r="0.9" fill="#e0e0e0"/><circle cx="56.4" cy="82.6" r="0.8" fill="#e0e0e0"/><circle cx="66.0" cy="67.1" r="0.9" fill="#e0e0e0"/><circle cx="26.3" cy="40.7" r="0.6" fill="#e0e0e0"/><circle cx="73.6" cy="12.8" r="0.7" fill="#e0e0e0"/><circle cx="7.0" cy="47.4" r="1.1" fill="#e0e0e0"/><circle cx="43.5" cy="29.0" r="0.9" fill="#e0e0e0"/><circle cx="17.2" cy="6.0" r="0.9" fill="#e0e0e0"/><circle cx="47.4" cy="71.8" r="0.8" fill="#e0e0e0"/><circle cx="64.4" cy="17.5" r="0.8" fill="#e0e0e0"/><circle cx="50.0" cy="57.8" r="0.6" fill="#1a1a1a"/><circle cx="73.9" cy="46.1" r="0.7" fill="#e0e0e0"/><circle cx="40.5" cy="17.9" r="1.0" fill="#e0e0e0"/><circle cx="55.0" cy="9.8" r="0.8" fill="#e0e0e0"/><circle cx="67.8" cy="39.8" r="0.8" fill="#e0e0e0"/><circle cx="74.2" cy="58.8" r="0.6" fill="#e0e0e0"/><circle cx="49.2" cy="61.7" r="0.7" fill="#e0e0e0"/><circle cx="57.1" cy="41.8" r="0.8" fill="#e0e0e0"/><circle cx="34.9" cy="84.0" r="0.6" fill="#e0e0e0"/><circle cx="29.6" cy="54.3" r="0.5" fill="#e0e0e0"/><circle cx="60.4" cy="83.9" r="0.6" fill="#1a1a1a"/><circle cx="39.7" cy="63.6" r="0.6" fill="#e0e0e0"/><circle cx="34.1" cy="10.7" r="0.9" fill="#e0e0e0"/><circle cx="28.0" cy="65.4" r="1.0" fill="#e0e0e0"/><circle cx="23.3" cy="28.7" r="0.5" fill="#e0e0e0"/><circle cx="23.7" cy="29.8" r="0.7" fill="#e0e0e0"/><circle cx="80.7" cy="73.3" r="0.6" fill="#e0e0e0"/><circle cx="40.4" cy="9.9" r="0.9" fill="#e0e0e0"/><circle cx="10.5" cy="81.7" r="1.1" fill="#e0e0e0"/><circle cx="32.7" cy="46.6" r="0.8" fill="#e0e0e0"/><circle cx="32.7" cy="9.1" r="1.0" fill="#e0e0e0"/><circle cx="39.0" cy="64.3" r="0.8" fill="#e0e0e0"/><circle cx="44.6" cy="31.6" r="0.9" fill="#e0e0e0"/><circle cx="56.5" cy="73.6" r="0.5" fill="#e0e0e0"/><circle cx="52.0" cy="52.5" r="0.9" fill="#e0e0e0"/><circle cx="71.3" cy="35.4" r="1.1" fill="#e0e0e0"/><circle cx="1.1" cy="73.2" r="0.7" fill="#e0e0e0"/><circle cx="58.2" cy="72.4" r="0.5" fill="#e0e0e0"/><circle cx="1.7" cy="47.6" r="1.0" fill="#e0e0e0"/><circle cx="40.8" cy="43.9" r="1.0" fill="#1a1a1a"/><circle cx="34.5" cy="58.4" r="0.5" fill="#e0e0e0"/><circle cx="55.8" cy="49.9" r="0.9" fill="#1a1a1a"/><circle cx="12.7" cy="64.7" r="0.5" fill="#e0e0e0"/><circle cx="38.7" cy="75.2" r="0.8" fill="#e0e0e0"/><circle cx="0.8" cy="56.2" r="1.0" fill="#1a1a1a"/><circle cx="17.9" cy="10.2" r="0.7" fill="#e0e0e0"/><circle cx="46.7" cy="37.9" r="1.1" fill="#1a1a1a"/><circle cx="30.0" cy="62.8" r="0.6" fill="#e0e0e0"/><circle cx="62.3" cy="24.6" r="0.8" fill="#e0e0e0"/><circle cx="54.9" cy="74.8" r="0.5" fill="#1a1a1a"/><circle cx="2.6" cy="5.1" r="0.9" fill="#1a1a1a"/><circle cx="50.7" cy="32.7" r="0.9" fill="#e0e0e0"/><circle cx="78.5" cy="70.1" r="0.7" fill="#e0e0e0"/><circle cx="77.8" cy="61.1" r="0.6" fill="#e0e0e0"/><circle cx="79.2" cy="9.8" r="0.6" fill="#1a1a1a"/><circle cx="65.8" cy="40.1" r="0.8" fill="#1a1a1a"/><circle cx="22.3" cy="63.4" r="0.7" fill="#e0e0e0"/><circle cx="51.0" cy="54.7" r="0.9" fill="#1a1a1a"/><circle cx="71.3" cy="61.0" r="0.6" fill="#e0e0e0"/><circle cx="68.3" cy="49.1" r="0.6" fill="#1a1a1a"/><circle cx="31.8" cy="31.6" r="0.6" fill="#1a1a1a"/><circle cx="37.0" cy="57.8" r="0.7" fill="#e0e0e0"/><circle cx="12.9" cy="77.3" r="1.0" fill="#1a1a1a"/><circle cx="23.7" cy="11.8" r="1.1" fill="#1a1a1a"/><circle cx="12.1" cy="81.9" r="0.8" fill="#1a1a1a"/><circle cx="63.7" cy="42.0" r="0.8" fill="#e0e0e0"/><circle cx="39.8" cy="32.1" r="0.9" fill="#1a1a1a"/><circle cx="80.5" cy="26.0" r="0.7" fill="#e0e0e0"/><circle cx="58.1" cy="77.8" r="0.5" fill="#e0e0e0"/><circle cx="31.6" cy="45.4" r="0.7" fill="#e0e0e0"/><circle cx="5.1" cy="33.4" r="0.7" fill="#e0e0e0"/><circle cx="68.3" cy="27.0" r="0.6" fill="#e0e0e0"/><circle cx="17.4" cy="7.7" r="0.7" fill="#1a1a1a"/><circle cx="47.4" cy="30.1" r="1.0" fill="#1a1a1a"/><circle cx="20.2" cy="77.5" r="1.0" fill="#e0e0e0"/><circle cx="30.5" cy="38.9" r="0.7" fill="#e0e0e0"/><circle cx="2.5" cy="23.6" r="0.6" fill="#e0e0e0"/><circle cx="16.8" cy="73.1" r="0.9" fill="#e0e0e0"/><circle cx="17.5" cy="77.7" r="0.6" fill="#e0e0e0"/><circle cx="36.6" cy="49.8" r="0.6" fill="#e0e0e0"/><circle cx="69.2" cy="28.5" r="0.7" fill="#1a1a1a"/><circle cx="2.3" cy="2.9" r="0.9" fill="#e0e0e0"/><circle cx="39.9" cy="71.0" r="1.0" fill="#1a1a1a"/><circle cx="52.5" cy="77.5" r="0.6" fill="#1a1a1a"/><circle cx="26.1" cy="19.6" r="1.1" fill="#e0e0e0"/><circle cx="41.5" cy="15.3" r="0.7" fill="#1a1a1a"/><circle cx="19.3" cy="60.5" r="1.1" fill="#e0e0e0"/><circle cx="77.2" cy="5.0" r="0.5" fill="#e0e0e0"/><circle cx="75.4" cy="21.7" r="0.9" fill="#e0e0e0"/><circle cx="62.5" cy="40.6" r="0.7" fill="#e0e0e0"/><circle cx="0.5" cy="16.7" r="0.9" fill="#1a1a1a"/><circle cx="36.2" cy="54.8" r="0.7" fill="#e0e0e0"/><circle cx="32.0" cy="31.5" r="0.8" fill="#e0e0e0"/><circle cx="66.2" cy="76.8" r="0.8" fill="#1a1a1a"/><circle cx="74.8" cy="67.1" r="1.0" fill="#e0e0e0"/><circle cx="6.4" cy="52.0" r="0.9" fill="#e0e0e0"/><circle cx="63.8" cy="80.5" r="0.7" fill="#1a1a1a"/><circle cx="1.8" cy="6.3" r="0.7" fill="#1a1a1a"/><circle cx="19.2" cy="9.7" r="0.7" fill="#e0e0e0"/><circle cx="60.4" cy="15.1" r="1.0" fill="#e0e0e0"/><circle cx="36.0" cy="12.5" r="0.6" fill="#e0e0e0"/><circle cx="2.1" cy="48.0" r="1.0" fill="#e0e0e0"/><circle cx="21.4" cy="9.2" r="0.8" fill="#e0e0e0"/><circle cx="12.6" cy="43.1" r="1.0" fill="#e0e0e0"/><circle cx="75.9" cy="47.0" r="0.6" fill="#1a1a1a"/><circle cx="61.9" cy="81.5" r="0.7" fill="#e0e0e0"/><circle cx="19.6" cy="20.0" r="0.7" fill="#e0e0e0"/><circle cx="13.3" cy="69.9" r="0.6" fill="#1a1a1a"/><circle cx="52.5" cy="37.1" r="0.8" fill="#e0e0e0"/><circle cx="36.3" cy="66.3" r="0.7" fill="#1a1a1a"/><circle cx="29.5" cy="3.4" r="0.7" fill="#e0e0e0"/><circle cx="14.8" cy="70.8" r="0.6" fill="#e0e0e0"/><circle cx="14.4" cy="50.5" r="1.0" fill="#1a1a1a"/><circle cx="59.9" cy="63.9" r="0.6" fill="#e0e0e0"/><circle cx="54.9" cy="52.8" r="0.7" fill="#e0e0e0"/><circle cx="0.8" cy="58.1" r="1.0" fill="#e0e0e0"/><circle cx="75.1" cy="43.6" r="0.7" fill="#e0e0e0"/><circle cx="52.4" cy="79.4" r="0.7" fill="#e0e0e0"/><circle cx="62.6" cy="11.2" r="0.6" fill="#e0e0e0"/><circle cx="46.2" cy="82.8" r="0.9" fill="#e0e0e0"/><circle cx="47.1" cy="72.1" r="1.1" fill="#e0e0e0"/><circle cx="79.4" cy="6.0" r="0.6" fill="#e0e0e0"/><circle cx="68.1" cy="76.7" r="1.0" fill="#1a1a1a"/><circle cx="47.3" cy="75.4" r="0.6" fill="#e0e0e0"/><circle cx="59.9" cy="37.5" r="1.0" fill="#e0e0e0"/><circle cx="11.0" cy="20.5" r="0.9" fill="#e0e0e0"/><circle cx="13.8" cy="26.2" r="1.1" fill="#e0e0e0"/><circle cx="1.6" cy="77.8" r="0.7" fill="#1a1a1a"/><circle cx="68.7" cy="53.5" r="0.6" fill="#e0e0e0"/><circle cx="36.4" cy="29.5" r="0.6" fill="#e0e0e0"/><circle cx="22.4" cy="39.0" r="1.0" fill="#e0e0e0"/><circle cx="9.0" cy="10.2" r="0.8" fill="#1a1a1a"/><circle cx="18.6" cy="19.1" r="0.8" fill="#e0e0e0"/><circle cx="32.5" cy="79.6" r="0.9" fill="#e0e0e0"/><circle cx="56.9" cy="50.2" r="0.5" fill="#e0e0e0"/><circle cx="79.6" cy="4.4" r="0.7" fill="#e0e0e0"/><circle cx="68.8" cy="60.1" r="0.8" fill="#1a1a1a"/><circle cx="80.8" cy="26.9" r="0.8" fill="#e0e0e0"/><circle cx="26.6" cy="12.3" r="0.7" fill="#e0e0e0"/><circle cx="71.4" cy="55.7" r="0.6" fill="#e0e0e0"/><circle cx="15.4" cy="27.2" r="0.9" fill="#e0e0e0"/><circle cx="18.5" cy="35.3" r="1.1" fill="#e0e0e0"/><circle cx="37.2" cy="3.9" r="1.1" fill="#1a1a1a"/><circle cx="3.3" cy="72.7" r="1.1" fill="#e0e0e0"/><circle cx="51.1" cy="52.8" r="0.5" fill="#1a1a1a"/><circle cx="8.2" cy="10.2" r="0.6" fill="#e0e0e0"/><circle cx="3.2" cy="9.5" r="0.6" fill="#e0e0e0"/><circle cx="4.9" cy="80.6" r="1.0" fill="#1a1a1a"/><circle cx="6.9" cy="49.6" r="0.8" fill="#1a1a1a"/><circle cx="42.0" cy="74.4" r="0.8" fill="#1a1a1a"/><circle cx="22.5" cy="61.8" r="0.7" fill="#1a1a1a"/><circle cx="37.2" cy="58.4" r="0.7" fill="#e0e0e0"/><circle cx="45.0" cy="30.8" r="0.7" fill="#1a1a1a"/><circle cx="39.2" cy="68.8" r="0.7" fill="#e0e0e0"/><circle cx="15.5" cy="45.9" r="0.7" fill="#1a1a1a"/><circle cx="75.8" cy="13.6" r="0.7" fill="#1a1a1a"/><circle cx="26.7" cy="22.7" r="0.6" fill="#1a1a1a"/><circle cx="4.7" cy="1.8" r="0.9" fill="#e0e0e0"/><circle cx="28.5" cy="55.2" r="1.0" fill="#e0e0e0"/><circle cx="29.0" cy="64.1" r="1.1" fill="#e0e0e0"/><circle cx="55.6" cy="78.5" r="0.9" fill="#e0e0e0"/><circle cx="11.5" cy="17.0" r="0.7" fill="#e0e0e0"/><circle cx="68.8" cy="8.0" r="1.1" fill="#1a1a1a"/><circle cx="81.6" cy="22.6" r="0.9" fill="#e0e0e0"/><circle cx="57.7" cy="34.7" r="0.7" fill="#e0e0e0"/><circle cx="45.1" cy="9.9" r="1.1" fill="#e0e0e0"/><circle cx="12.3" cy="71.4" r="0.9" fill="#e0e0e0"/><circle cx="9.1" cy="71.5" r="0.7" fill="#e0e0e0"/><circle cx="28.9" cy="29.6" r="0.9" fill="#e0e0e0"/><circle cx="53.2" cy="0.6" r="1.1" fill="#1a1a1a"/><circle cx="31.2" cy="25.2" r="1.0" fill="#e0e0e0"/><circle cx="35.7" cy="31.7" r="1.0" fill="#e0e0e0"/><circle cx="27.1" cy="81.4" r="0.6" fill="#e0e0e0"/><circle cx="26.7" cy="81.7" r="1.1" fill="#1a1a1a"/><circle cx="2.1" cy="21.6" r="0.7" fill="#1a1a1a"/><circle cx="44.0" cy="26.2" r="0.8" fill="#e0e0e0"/><circle cx="67.7" cy="61.1" r="0.8" fill="#e0e0e0"/><circle cx="3.3" cy="56.8" r="0.5" fill="#e0e0e0"/><circle cx="5.6" cy="19.3" r="0.8" fill="#e0e0e0"/><circle cx="53.2" cy="78.0" r="0.6" fill="#e0e0e0"/><circle cx="34.5" cy="33.7" r="1.0" fill="#1a1a1a"/><circle cx="48.2" cy="58.1" r="0.6" fill="#1a1a1a"/><circle cx="29.7" cy="30.8" r="0.7" fill="#e0e0e0"/><circle cx="14.4" cy="55.1" r="0.7" fill="#e0e0e0"/><circle cx="76.7" cy="42.7" r="0.9" fill="#1a1a1a"/><circle cx="43.0" cy="68.6" r="1.0" fill="#e0e0e0"/><circle cx="33.8" cy="5.1" r="0.6" fill="#e0e0e0"/><circle cx="46.7" cy="53.0" r="0.9" fill="#1a1a1a"/><circle cx="0.9" cy="0.2" r="0.8" fill="#1a1a1a"/><circle cx="75.2" cy="33.4" r="0.5" fill="#e0e0e0"/><circle cx="2.4" cy="14.7" r="0.8" fill="#1a1a1a"/><circle cx="71.4" cy="75.2" r="0.6" fill="#e0e0e0"/><circle cx="16.3" cy="50.5" r="0.8" fill="#e0e0e0"/><circle cx="41.8" cy="2.4" r="1.1" fill="#e0e0e0"/><circle cx="40.2" cy="39.3" r="1.0" fill="#e0e0e0"/><circle cx="53.3" cy="57.5" r="0.6" fill="#e0e0e0"/><circle cx="19.5" cy="23.1" r="0.9" fill="#e0e0e0"/><circle cx="70.5" cy="79.6" r="0.6" fill="#e0e0e0"/><circle cx="51.2" cy="1.6" r="0.7" fill="#e0e0e0"/><circle cx="62.7" cy="3.7" r="0.6" fill="#e0e0e0"/><circle cx="18.3" cy="13.4" r="0.6" fill="#e0e0e0"/><circle cx="0.5" cy="72.8" r="0.8" fill="#e0e0e0"/><circle cx="20.7" cy="74.5" r="0.5" fill="#1a1a1a"/><circle cx="55.5" cy="56.7" r="0.7" fill="#e0e0e0"/><circle cx="32.7" cy="59.8" r="1.0" fill="#e0e0e0"/><circle cx="7.2" cy="14.3" r="0.5" fill="#e0e0e0"/><circle cx="72.3" cy="33.3" r="0.7" fill="#e0e0e0"/><circle cx="71.5" cy="28.2" r="1.1" fill="#e0e0e0"/><circle cx="34.6" cy="76.7" r="0.7" fill="#e0e0e0"/><circle cx="38.3" cy="28.9" r="0.7" fill="#e0e0e0"/><circle cx="2.1" cy="67.6" r="0.6" fill="#e0e0e0"/><circle cx="16.1" cy="45.8" r="0.8" fill="#1a1a1a"/><circle cx="38.3" cy="66.8" r="0.7" fill="#e0e0e0"/><circle cx="17.8" cy="34.0" r="0.8" fill="#e0e0e0"/><circle cx="24.4" cy="40.0" r="1.0" fill="#e0e0e0"/><circle cx="55.4" cy="79.1" r="0.9" fill="#1a1a1a"/><circle cx="36.1" cy="83.2" r="0.7" fill="#e0e0e0"/><circle cx="41.8" cy="10.5" r="0.9" fill="#1a1a1a"/><circle cx="7.5" cy="71.6" r="1.0" fill="#1a1a1a"/><circle cx="2.4" cy="60.3" r="0.5" fill="#e0e0e0"/><circle cx="58.3" cy="58.4" r="0.6" fill="#1a1a1a"/><circle cx="15.4" cy="74.9" r="1.0" fill="#e0e0e0"/><circle cx="66.0" cy="63.7" r="0.9" fill="#e0e0e0"/><circle cx="7.2" cy="24.2" r="0.7" fill="#1a1a1a"/><circle cx="29.2" cy="70.9" r="0.9" fill="#e0e0e0"/><circle cx="51.5" cy="72.5" r="0.6" fill="#1a1a1a"/><circle cx="30.1" cy="67.1" r="1.0" fill="#e0e0e0"/><circle cx="2.1" cy="59.1" r="1.1" fill="#e0e0e0"/><circle cx="32.8" cy="76.1" r="0.7" fill="#e0e0e0"/><circle cx="22.2" cy="51.1" r="0.9" fill="#e0e0e0"/><circle cx="33.2" cy="51.1" r="1.0" fill="#e0e0e0"/><circle cx="12.8" cy="62.0" r="0.9" fill="#e0e0e0"/><circle cx="77.2" cy="47.4" r="0.8" fill="#e0e0e0"/><circle cx="42.7" cy="77.8" r="0.8" fill="#e0e0e0"/><circle cx="76.7" cy="9.4" r="0.9" fill="#1a1a1a"/><circle cx="73.9" cy="73.5" r="0.9" fill="#e0e0e0"/><circle cx="79.9" cy="57.2" r="0.7" fill="#e0e0e0"/><circle cx="63.7" cy="29.0" r="0.8" fill="#1a1a1a"/><circle cx="61.0" cy="83.8" r="0.6" fill="#e0e0e0"/><circle cx="43.2" cy="29.3" r="0.8" fill="#1a1a1a"/><circle cx="27.9" cy="42.3" r="1.0" fill="#e0e0e0"/><circle cx="51.3" cy="42.7" r="0.6" fill="#e0e0e0"/><circle cx="55.2" cy="71.1" r="0.8" fill="#1a1a1a"/><circle cx="15.5" cy="80.0" r="0.8" fill="#1a1a1a"/><circle cx="14.3" cy="13.8" r="0.6" fill="#1a1a1a"/><circle cx="21.3" cy="80.9" r="0.7" fill="#e0e0e0"/><circle cx="7.6" cy="53.5" r="0.9" fill="#e0e0e0"/><circle cx="39.9" cy="40.6" r="0.5" fill="#1a1a1a"/><circle cx="56.7" cy="11.2" r="0.9" fill="#e0e0e0"/><circle cx="10.9" cy="59.4" r="0.6" fill="#e0e0e0"/><circle cx="51.6" cy="9.9" r="1.1" fill="#e0e0e0"/><circle cx="55.5" cy="13.0" r="1.0" fill="#1a1a1a"/><circle cx="33.3" cy="17.3" r="0.5" fill="#e0e0e0"/><circle cx="39.9" cy="3.6" r="0.7" fill="#1a1a1a"/><circle cx="9.1" cy="25.9" r="0.6" fill="#1a1a1a"/><circle cx="36.5" cy="47.8" r="0.8" fill="#e0e0e0"/><circle cx="3.7" cy="39.4" r="0.8" fill="#1a1a1a"/><circle cx="61.3" cy="27.9" r="0.7" fill="#1a1a1a"/><circle cx="52.9" cy="80.4" r="1.0" fill="#e0e0e0"/><circle cx="26.4" cy="30.2" r="0.7" fill="#e0e0e0"/><circle cx="50.3" cy="61.4" r="0.9" fill="#e0e0e0"/><circle cx="6.4" cy="62.8" r="0.7" fill="#e0e0e0"/><circle cx="11.9" cy="30.9" r="0.8" fill="#1a1a1a"/><circle cx="73.4" cy="57.3" r="0.9" fill="#e0e0e0"/><circle cx="25.4" cy="51.8" r="0.9" fill="#e0e0e0"/><circle cx="29.2" cy="19.3" r="1.1" fill="#e0e0e0"/><circle cx="68.7" cy="21.3" r="0.6" fill="#e0e0e0"/><circle cx="65.8" cy="77.4" r="0.7" fill="#1a1a1a"/><circle cx="4.1" cy="18.2" r="0.9" fill="#e0e0e0"/><circle cx="81.6" cy="50.6" r="0.6" fill="#e0e0e0"/><circle cx="18.7" cy="11.6" r="0.7" fill="#e0e0e0"/><circle cx="80.3" cy="71.5" r="0.6" fill="#e0e0e0"/><circle cx="30.5" cy="2.7" r="1.0" fill="#e0e0e0"/><circle cx="41.9" cy="12.0" r="0.5" fill="#e0e0e0"/><circle cx="58.3" cy="74.8" r="0.5" fill="#e0e0e0"/><circle cx="78.4" cy="14.8" r="0.7" fill="#1a1a1a"/><circle cx="0.3" cy="67.5" r="0.8" fill="#e0e0e0"/><circle cx="38.4" cy="45.6" r="0.8" fill="#e0e0e0"/><circle cx="43.8" cy="52.6" r="0.7" fill="#e0e0e0"/><circle cx="49.9" cy="6.8" r="0.9" fill="#1a1a1a"/><circle cx="27.2" cy="55.3" r="0.8" fill="#e0e0e0"/><circle cx="30.2" cy="55.1" r="1.0" fill="#e0e0e0"/><circle cx="43.5" cy="53.2" r="0.6" fill="#1a1a1a"/><circle cx="60.7" cy="58.1" r="0.8" fill="#e0e0e0"/><circle cx="45.5" cy="79.2" r="0.6" fill="#e0e0e0"/><circle cx="36.2" cy="21.9" r="1.1" fill="#e0e0e0"/><circle cx="16.6" cy="63.0" r="1.0" fill="#e0e0e0"/><circle cx="53.3" cy="15.8" r="0.9" fill="#e0e0e0"/><circle cx="18.6" cy="38.5" r="0.9" fill="#e0e0e0"/><circle cx="60.3" cy="76.4" r="1.0" fill="#e0e0e0"/><circle cx="55.7" cy="67.2" r="0.8" fill="#e0e0e0"/><circle cx="41.6" cy="70.4" r="0.9" fill="#1a1a1a"/><circle cx="78.8" cy="43.3" r="0.9" fill="#e0e0e0"/><circle cx="44.6" cy="81.3" r="0.8" fill="#e0e0e0"/><circle cx="7.6" cy="31.4" r="0.7" fill="#e0e0e0"/><circle cx="3.9" cy="3.5" r="1.1" fill="#1a1a1a"/><circle cx="37.7" cy="10.1" r="1.0" fill="#e0e0e0"/><circle cx="7.2" cy="83.0" r="0.6" fill="#e0e0e0"/><circle cx="59.7" cy="29.8" r="1.0" fill="#e0e0e0"/><circle cx="65.9" cy="61.8" r="0.7" fill="#e0e0e0"/><circle cx="19.6" cy="43.1" r="0.7" fill="#e0e0e0"/><circle cx="40.1" cy="68.6" r="0.7" fill="#e0e0e0"/><circle cx="26.8" cy="50.7" r="1.0" fill="#e0e0e0"/><circle cx="19.9" cy="29.8" r="0.5" fill="#e0e0e0"/><circle cx="81.1" cy="36.9" r="0.8" fill="#1a1a1a"/><circle cx="6.0" cy="21.7" r="1.1" fill="#e0e0e0"/><circle cx="71.6" cy="56.2" r="0.9" fill="#1a1a1a"/><circle cx="20.5" cy="83.8" r="0.7" fill="#1a1a1a"/><circle cx="36.4" cy="2.1" r="0.8" fill="#1a1a1a"/><circle cx="39.7" cy="2.7" r="0.5" fill="#1a1a1a"/><circle cx="50.9" cy="54.2" r="1.0" fill="#e0e0e0"/><circle cx="79.3" cy="58.2" r="0.6" fill="#e0e0e0"/><circle cx="78.5" cy="43.4" r="0.8" fill="#e0e0e0"/><circle cx="25.5" cy="11.0" r="0.6" fill="#e0e0e0"/><circle cx="67.2" cy="61.1" r="0.8" fill="#e0e0e0"/><circle cx="76.9" cy="26.4" r="0.8" fill="#e0e0e0"/><circle cx="18.6" cy="20.9" r="0.9" fill="#1a1a1a"/><circle cx="51.7" cy="61.1" r="0.7" fill="#e0e0e0"/><circle cx="5.2" cy="83.3" r="0.8" fill="#e0e0e0"/><circle cx="47.9" cy="11.7" r="1.0" fill="#e0e0e0"/><circle cx="74.0" cy="8.0" r="0.8" fill="#e0e0e0"/><circle cx="46.9" cy="8.3" r="1.0" fill="#1a1a1a"/><circle cx="19.5" cy="66.9" r="0.5" fill="#e0e0e0"/><circle cx="79.0" cy="28.7" r="1.0" fill="#e0e0e0"/><circle cx="20.1" cy="73.3" r="0.7" fill="#1a1a1a"/><circle cx="57.7" cy="56.4" r="1.0" fill="#1a1a1a"/><circle cx="41.3" cy="75.1" r="1.1" fill="#1a1a1a"/><circle cx="12.4" cy="17.3" r="0.9" fill="#1a1a1a"/><circle cx="33.2" cy="33.3" r="1.1" fill="#1a1a1a"/><circle cx="48.1" cy="12.1" r="0.7" fill="#1a1a1a"/><circle cx="46.9" cy="55.3" r="0.5" fill="#1a1a1a"/><circle cx="15.6" cy="77.7" r="0.7" fill="#e0e0e0"/><circle cx="29.0" cy="39.3" r="0.9" fill="#1a1a1a"/><circle cx="59.1" cy="77.4" r="0.7" fill="#1a1a1a"/><circle cx="14.4" cy="75.4" r="1.0" fill="#e0e0e0"/><circle cx="51.4" cy="19.9" r="0.5" fill="#e0e0e0"/><circle cx="36.7" cy="75.0" r="0.8" fill="#e0e0e0"/><circle cx="8.2" cy="20.3" r="0.6" fill="#e0e0e0"/><circle cx="4.0" cy="6.2" r="0.8" fill="#1a1a1a"/><circle cx="59.0" cy="0.4" r="0.9" fill="#e0e0e0"/><circle cx="1.2" cy="27.1" r="0.7" fill="#e0e0e0"/><circle cx="71.2" cy="2.3" r="0.9" fill="#e0e0e0"/><circle cx="65.6" cy="14.7" r="1.0" fill="#1a1a1a"/><circle cx="7.2" cy="51.5" r="1.1" fill="#1a1a1a"/><circle cx="32.8" cy="79.0" r="0.5" fill="#1a1a1a"/><circle cx="26.0" cy="54.9" r="0.7" fill="#e0e0e0"/><circle cx="58.2" cy="70.1" r="0.5" fill="#e0e0e0"/><circle cx="17.3" cy="44.5" r="0.7" fill="#1a1a1a"/><circle cx="29.7" cy="28.9" r="1.0" fill="#e0e0e0"/><circle cx="12.6" cy="82.4" r="0.6" fill="#e0e0e0"/><circle cx="50.7" cy="68.3" r="0.5" fill="#e0e0e0"/><circle cx="53.1" cy="54.7" r="0.9" fill="#e0e0e0"/><circle cx="45.9" cy="30.4" r="0.7" fill="#e0e0e0"/><circle cx="20.7" cy="46.9" r="1.0" fill="#e0e0e0"/><circle cx="80.1" cy="12.6" r="0.7" fill="#e0e0e0"/><circle cx="80.3" cy="78.7" r="0.6" fill="#e0e0e0"/><circle cx="44.5" cy="17.2" r="0.7" fill="#1a1a1a"/><circle cx="49.7" cy="62.0" r="1.0" fill="#1a1a1a"/><circle cx="70.2" cy="65.4" r="0.7" fill="#e0e0e0"/><circle cx="58.2" cy="37.1" r="0.6" fill="#1a1a1a"/><circle cx="74.8" cy="75.7" r="0.6" fill="#e0e0e0"/><circle cx="64.8" cy="2.2" r="0.5" fill="#e0e0e0"/><circle cx="66.2" cy="76.7" r="0.7" fill="#e0e0e0"/><circle cx="18.7" cy="31.6" r="0.7" fill="#1a1a1a"/><circle cx="53.9" cy="72.3" r="0.5" fill="#e0e0e0"/><circle cx="58.2" cy="20.3" r="0.7" fill="#e0e0e0"/><circle cx="34.9" cy="23.4" r="0.8" fill="#1a1a1a"/><circle cx="80.5" cy="66.4" r="1.1" fill="#e0e0e0"/><circle cx="63.1" cy="80.2" r="0.7" fill="#e0e0e0"/><circle cx="7.3" cy="0.3" r="0.6" fill="#1a1a1a"/><circle cx="26.2" cy="51.3" r="0.6" fill="#1a1a1a"/><circle cx="4.3" cy="65.7" r="0.9" fill="#1a1a1a"/><circle cx="3.8" cy="65.0" r="0.8" fill="#e0e0e0"/><circle cx="11.5" cy="78.6" r="1.0" fill="#e0e0e0"/><circle cx="12.5" cy="76.7" r="0.7" fill="#e0e0e0"/><circle cx="41.2" cy="29.5" r="0.8" fill="#1a1a1a"/><circle cx="32.6" cy="34.8" r="0.9" fill="#e0e0e0"/><circle cx="32.5" cy="28.2" r="0.9" fill="#1a1a1a"/><circle cx="16.5" cy="52.7" r="0.6" fill="#e0e0e0"/><circle cx="48.8" cy="48.3" r="0.9" fill="#e0e0e0"/><circle cx="4.0" cy="75.1" r="0.6" fill="#e0e0e0"/><circle cx="78.5" cy="81.5" r="0.5" fill="#e0e0e0"/><circle cx="18.4" cy="45.4" r="0.8" fill="#e0e0e0"/><circle cx="81.5" cy="44.5" r="1.1" fill="#1a1a1a"/><circle cx="6.3" cy="81.5" r="1.1" fill="#1a1a1a"/><circle cx="18.4" cy="6.1" r="0.5" fill="#1a1a1a"/><circle cx="22.1" cy="81.2" r="0.5" fill="#e0e0e0"/><circle cx="64.7" cy="80.0" r="0.7" fill="#e0e0e0"/><circle cx="3.4" cy="38.1" r="0.7" fill="#e0e0e0"/><circle cx="33.7" cy="83.4" r="0.7" fill="#1a1a1a"/><circle cx="34.6" cy="45.4" r="0.6" fill="#e0e0e0"/><circle cx="62.4" cy="74.1" r="1.0" fill="#1a1a1a"/><circle cx="52.1" cy="20.1" r="1.1" fill="#e0e0e0"/><circle cx="56.9" cy="61.3" r="1.0" fill="#1a1a1a"/><circle cx="54.4" cy="7.3" r="0.5" fill="#e0e0e0"/><circle cx="58.7" cy="34.1" r="0.9" fill="#e0e0e0"/><circle cx="36.3" cy="56.1" r="0.8" fill="#e0e0e0"/><circle cx="38.8" cy="54.4" r="0.7" fill="#e0e0e0"/><circle cx="44.8" cy="31.9" r="1.0" fill="#1a1a1a"/><circle cx="71.3" cy="29.8" r="1.1" fill="#e0e0e0"/><circle cx="21.8" cy="55.4" r="0.5" fill="#1a1a1a"/><circle cx="65.4" cy="55.8" r="1.0" fill="#1a1a1a"/><circle cx="21.5" cy="70.6" r="0.7" fill="#1a1a1a"/><circle cx="48.3" cy="47.9" r="0.5" fill="#1a1a1a"/><circle cx="62.1" cy="30.6" r="0.6" fill="#e0e0e0"/><circle cx="30.0" cy="56.6" r="0.9" fill="#e0e0e0"/><circle cx="14.6" cy="79.6" r="0.9" fill="#1a1a1a"/><circle cx="74.7" cy="27.0" r="1.0" fill="#e0e0e0"/><circle cx="35.1" cy="34.4" r="0.7" fill="#1a1a1a"/><circle cx="29.9" cy="55.7" r="0.7" fill="#e0e0e0"/><circle cx="54.3" cy="23.1" r="0.8" fill="#e0e0e0"/><circle cx="9.2" cy="53.3" r="0.6" fill="#1a1a1a"/><circle cx="42.4" cy="0.5" r="0.8" fill="#e0e0e0"/><circle cx="54.1" cy="52.3" r="1.0" fill="#e0e0e0"/><circle cx="20.7" cy="46.7" r="0.7" fill="#e0e0e0"/><circle cx="48.4" cy="25.7" r="1.1" fill="#e0e0e0"/><circle cx="21.0" cy="22.3" r="0.8" fill="#e0e0e0"/><circle cx="40.5" cy="7.5" r="1.1" fill="#e0e0e0"/><circle cx="23.8" cy="65.6" r="0.9" fill="#1a1a1a"/><circle cx="30.8" cy="3.5" r="1.1" fill="#1a1a1a"/><circle cx="35.3" cy="51.0" r="0.6" fill="#e0e0e0"/><circle cx="69.7" cy="10.9" r="1.1" fill="#e0e0e0"/><circle cx="69.8" cy="48.7" r="0.6" fill="#e0e0e0"/><circle cx="70.5" cy="6.7" r="0.7" fill="#e0e0e0"/><circle cx="34.0" cy="78.6" r="1.0" fill="#e0e0e0"/><circle cx="8.8" cy="47.3" r="0.9" fill="#1a1a1a"/><circle cx="35.8" cy="83.6" r="0.5" fill="#e0e0e0"/><circle cx="32.6" cy="11.4" r="0.5" fill="#1a1a1a"/><circle cx="19.1" cy="16.8" r="1.1" fill="#e0e0e0"/><circle cx="24.1" cy="27.7" r="0.8" fill="#e0e0e0"/><circle cx="7.4" cy="71.2" r="0.5" fill="#e0e0e0"/><circle cx="40.7" cy="71.2" r="0.8" fill="#e0e0e0"/><circle cx="67.6" cy="16.8" r="1.0" fill="#e0e0e0"/><circle cx="45.1" cy="62.8" r="0.6" fill="#1a1a1a"/><circle cx="33.4" cy="4.2" r="0.7" fill="#e0e0e0"/><circle cx="15.6" cy="82.5" r="0.8" fill="#e0e0e0"/><circle cx="42.6" cy="7.3" r="0.9" fill="#e0e0e0"/><circle cx="24.5" cy="33.2" r="0.9" fill="#1a1a1a"/><circle cx="25.2" cy="20.9" r="0.8" fill="#e0e0e0"/><circle cx="44.2" cy="25.6" r="0.6" fill="#e0e0e0"/><circle cx="53.5" cy="78.3" r="0.9" fill="#e0e0e0"/><circle cx="11.6" cy="78.2" r="0.8" fill="#e0e0e0"/><circle cx="58.0" cy="55.8" r="0.5" fill="#1a1a1a"/><circle cx="5.5" cy="79.9" r="0.5" fill="#1a1a1a"/><circle cx="18.0" cy="36.9" r="0.6" fill="#e0e0e0"/><circle cx="79.8" cy="51.3" r="0.9" fill="#e0e0e0"/><circle cx="16.7" cy="17.1" r="1.0" fill="#e0e0e0"/><circle cx="10.2" cy="11.5" r="1.0" fill="#1a1a1a"/><circle cx="40.8" cy="1.2" r="0.9" fill="#1a1a1a"/><circle cx="13.5" cy="18.5" r="0.9" fill="#1a1a1a"/><circle cx="65.8" cy="44.9" r="1.0" fill="#e0e0e0"/><circle cx="58.7" cy="43.4" r="0.6" fill="#e0e0e0"/><circle cx="7.5" cy="4.2" r="1.0" fill="#e0e0e0"/><circle cx="57.9" cy="37.2" r="1.0" fill="#e0e0e0"/><circle cx="75.8" cy="11.2" r="0.8" fill="#e0e0e0"/></svg></div>
<div class="a th" style="left:262px;top:395px;"><svg width="82" height="84" viewBox="0 0 82 84" preserveAspectRatio="none"><defs><pattern id="p11" width="3.2" height="3.2" patternUnits="userSpaceOnUse" patternTransform="rotate(15)"><rect width="3.2" height="3.2" fill="#7e7e7e"/><circle cx="1.6" cy="1.6" r="0.9" fill="#959595"/></pattern></defs><rect width="82" height="84" fill="url(#p11)"/></svg></div>
<div class="a th" style="left:350px;top:395px;"><svg width="82" height="84" viewBox="0 0 82 84" preserveAspectRatio="none"><defs><pattern id="ck" width="3.6" height="3.6" patternUnits="userSpaceOnUse" patternTransform="rotate(-22)"><rect width="3.6" height="3.6" fill="#dadada"/><rect width="1.7" height="1.7" fill="#5e5e5e"/><rect x="1.8" y="1.8" width="1.7" height="1.7" fill="#5e5e5e"/></pattern></defs><rect width="82" height="84" fill="url(#ck)"/></svg></div>
</div><!--/thumbs-->

  <!-- grid scrollbar -->
  <div class="a sb" style="left:706px;top:217px;width:18px;height:18px"></div>
  <svg class="a" style="left:709px;top:222px" width="12" height="8"><path d="M1 7 L11 7 L6 1.5 Z" fill="#c6c6c6"/></svg>
  <div class="a sb" style="left:706px;top:237px;width:18px;height:287px;background:#404040"></div>
  <div class="a sb" style="left:706px;top:525px;width:18px;height:18px"></div>
  <svg class="a" style="left:709px;top:530px" width="12" height="8"><path d="M1 1 L11 1 L6 6.5 Z" fill="#c6c6c6"/></svg>

  <!-- splitter dots -->
  <div class="a" style="left:724px;top:215px;width:9px;height:329px;background:#3c3c3c;border-left:2px solid #3a3a3a"><div style="position:absolute;left:0;top:0;width:1px;height:331px;background:#535353"></div></div>
  <div class="a" style="left:733px;top:543px;width:218px;height:1px;background:#393939"></div>
  <div class="a" style="left:729px;top:371px;width:2px;height:23px;background:repeating-linear-gradient(#9a9a9a 0 2px,transparent 2px 4.5px)"></div>

  <!-- preview -->
  <div id="preview" class="a" style="left:733px;top:217px;width:199px;height:307px;background:#1a9f7c;overflow:hidden"><svg width="199" height="307" style="display:block"><filter id="pb8" x="-30%" y="-30%" width="160%" height="160%"><feGaussianBlur stdDeviation="5"/></filter><filter id="pb3" x="-30%" y="-30%" width="160%" height="160%"><feGaussianBlur stdDeviation="2.5"/></filter><filter id="pb1" x="-30%" y="-30%" width="160%" height="160%"><feGaussianBlur stdDeviation="1.8"/></filter><filter id="mpv" x="0" y="0" width="100%" height="100%" color-interpolation-filters="sRGB"><feTurbulence type="fractalNoise" baseFrequency="0.012 0.01" numOctaves="3" seed="9"/><feColorMatrix type="matrix" values="0 0 0 0 0.09  0 0 0 0 0.83  0 0 0 0 0.5  1 0 0 0 0"/><feComponentTransfer><feFuncA type="table" tableValues="0 0 0.9 0 0 0.9 0 0 0.9 0 0 0.9 0 0 0.9 0 0 0.9 0"/></feComponentTransfer></filter><filter id="mpd" x="0" y="0" width="100%" height="100%" color-interpolation-filters="sRGB"><feTurbulence type="fractalNoise" baseFrequency="0.03" numOctaves="3" seed="21"/><feColorMatrix type="matrix" values="0 0 0 0 0.05  0 0 0 0 0.45  0 0 0 0 0.38  1.6 0 0 0 -0.8"/></filter><rect width="199" height="307" fill="#10a47c"/><g fill="#12d07c" filter="url(#pb8)"><path d="M0 25 L40 30 L60 60 L55 100 L20 115 L0 110Z"/><path d="M80 30 L150 28 L160 60 L140 80 L100 90 L78 70Z"/><path d="M145 -5 L205 -5 L205 40 L170 55 L150 40Z"/><path d="M0 120 L60 110 L110 130 L90 160 L30 160 L0 150Z" opacity="0.8"/><path d="M120 125 L199 105 L205 170 L160 200 L120 175Z" opacity="0.9"/><path d="M60 220 L110 240 L150 300 L100 310 L60 270Z" opacity="0.7"/></g><g fill="none" stroke="#16d680" stroke-width="9" filter="url(#pb3)" stroke-linecap="round"><path d="M28 200 C40 230 50 255 75 270 C95 280 110 290 122 307"/><path d="M90 220 C110 230 130 250 150 280" stroke-width="6" opacity="0.7"/><path d="M0 165 C30 150 60 160 100 145 C130 135 160 120 199 110" opacity="0.7"/></g><g fill="#0d8a70" filter="url(#pb8)"><path d="M0 170 L55 175 L60 230 L40 290 L0 300Z" opacity="0.8"/><path d="M140 210 L199 200 L199 307 L150 307Z" opacity="0.6"/><path d="M0 0 L155 0 L140 16 L100 24 L85 28 L60 16 L25 20 L0 10Z" opacity="1"/></g><rect width="199" height="307" filter="url(#mpv)" opacity="0.5"/><filter id="pca" x="0" y="0" width="100%" height="100%" color-interpolation-filters="sRGB"><feTurbulence type="fractalNoise" baseFrequency="0.012" numOctaves="3" seed="51"/><feColorMatrix type="matrix" values="0 0 0 0 0.157  0 0 0 0 0.902  0 0 0 0 0.549  1 0 0 0 0"/><feComponentTransfer><feFuncA type="table" tableValues="0 0 0 0 0 0 0 0 0 0 0 0 1 0.5 0 1 0.5 0 1 0.5 0 1 0.5 0 1 0.5 0 1 0.5 0 1 0.5 0 1 0.5 0 0 0 0 0 0 0 0 0 0 0 0 0"/></feComponentTransfer><feGaussianBlur stdDeviation="0.6"/></filter><rect width="199" height="307" filter="url(#pca)" opacity="0.28"/><g fill="#083f3a" filter="url(#pb1)" opacity="0.85"><path d="M0 0 L156 0 L153 3 L140 7 L130 11 L120 18 L110 23 L100 28 L90 31 L80 23 L70 15 L60 11 L50 13 L40 15 L30 18 L20 19 L12 15 L4 9 L0 7Z" fill="#0b6456" opacity="0.75"/><path d="M2 7 L12 14 L20 18 L30 17 L40 14 L50 12 L60 10 L70 14 L80 22 L90 30 L100 27 L110 22 L120 17 L130 10 L140 6 L154 1" fill="none" stroke="#05302b" stroke-width="4" stroke-linejoin="round"/><path d="M116 102 C120 94 138 94 144 104 C148 114 140 126 130 125 C122 124 114 112 116 102Z" opacity="0.8"/><path d="M124 104 C128 100 136 102 138 108 C138 114 132 118 128 116Z" fill="#137a66" opacity="0.7"/><path d="M66 116 C72 114 80 118 82 122 L78 125 C72 122 68 120 66 119Z"/><ellipse cx="23" cy="123" rx="5" ry="4" opacity="0.8"/><ellipse cx="31" cy="62" rx="3" ry="4" opacity="0.8"/><ellipse cx="114" cy="76" rx="6" ry="3" opacity="0.8"/><path d="M190 136 C180 150 170 165 160 175 C152 182 146 186 140 190 L142 186 C150 178 160 166 170 152 C176 144 182 138 188 134Z"/><path d="M14 212 C20 225 24 240 22 255 C18 268 10 272 6 262 C8 250 12 238 8 222Z" opacity="0.5"/></g></svg></div><!--/preview-->

  <!-- preview v scrollbar -->
  <div class="a" style="left:933px;top:217px;width:18px;height:326px;background:#3f3f3f"></div>
  <div class="a sb" style="left:933px;top:217px;width:18px;height:18px"></div>
  <svg class="a" style="left:936px;top:222px" width="12" height="8"><path d="M1 7 L11 7 L6 1.5 Z" fill="#c6c6c6"/></svg>
  <div class="a sb" style="left:933px;top:237px;width:18px;height:62px"></div>
  <div class="a sb" style="left:933px;top:505px;width:18px;height:18px"></div>
  <svg class="a" style="left:936px;top:510px" width="12" height="8"><path d="M1 1 L11 1 L6 6.5 Z" fill="#c6c6c6"/></svg>
  <div class="a sb" style="left:933px;top:525px;width:18px;height:18px;background:#3f3f3f"></div>

  <!-- preview h scrollbar -->
  <div class="a" style="left:733px;top:525px;width:199px;height:18px;background:#3f3f3f"></div>
  <div class="a sb" style="left:733px;top:525px;width:18px;height:18px"></div>
  <svg class="a" style="left:737px;top:528px" width="8" height="12"><path d="M7 1 L7 11 L1.5 6 Z" fill="#c6c6c6"/></svg>
  <div class="a sb" style="left:752px;top:525px;width:36px;height:18px"></div>
  <div class="a sb" style="left:913px;top:525px;width:18px;height:18px"></div>
  <svg class="a" style="left:918px;top:528px" width="8" height="12"><path d="M1 1 L1 11 L6.5 6 Z" fill="#c6c6c6"/></svg>

  <!-- search -->
  <div class="a" style="left:258px;top:544px;width:694px;height:1px;background:#444"></div><div class="a" style="left:258px;top:545px;width:694px;height:1px;background:#323232"></div>
  <div class="a" style="left:258px;top:546px;width:694px;height:33px;background:#3a3a3a;border-radius:3px;box-shadow:inset 0 1px 0 #343434"></div>
  <div class="a t" style="left:262px;top:552px;color:#8c8c8c">Search</div>

  <div class="a btn" style="left:259px;top:579px;width:171px;height:31px"></div>
  <div class="a btn" style="left:433px;top:579px;width:171px;height:31px"></div>
  <svg class="a" style="left:335px;top:585px" width="19" height="19"><path fill-rule="evenodd" fill="#d6d6d6" d="M1 1 H9 L10.6 2.8 H17.6 V17.2 H1 Z M3.2 9.2 L6.3 7 H15.6 V15.4 H3.2 Z"/></svg>
  <svg class="a" style="left:510px;top:585px" width="17" height="19"><path d="M3.8 6.5 V16.5 H12.2 V6.5" fill="none" stroke="#d8d8d8" stroke-width="1.6"/><path d="M1 5 H15.2" fill="none" stroke="#d8d8d8" stroke-width="1.6"/><path d="M5.8 4.6 V2.3 H10.3 V4.6" fill="none" stroke="#d8d8d8" stroke-width="1.4"/></svg>

  <!-- dialog buttons -->
  <div class="a btn" style="left:751px;top:647px;width:110px;height:32px;background:linear-gradient(#484848,#424242);border-color:#2c2c2c;box-shadow:inset 0 0 0 1px #565656,0 1px 0 #3a3a3a"></div>
  <div class="a t" style="left:751px;top:654px;width:110px;text-align:center"><span class="u" style="text-underline-offset:3px">C</span>ancel</div>
  <div class="a btn" style="left:871px;top:647px;width:108px;height:32px;background:linear-gradient(#42444a,#3c3f45);border:2px solid #4f5d70;box-shadow:0 0 0 1px #333840"></div>
  <div class="a t" style="left:871px;top:654px;width:108px;text-align:center"><span class="u" style="text-underline-offset:3px">O</span>K</div>
</div>
</body></html>
